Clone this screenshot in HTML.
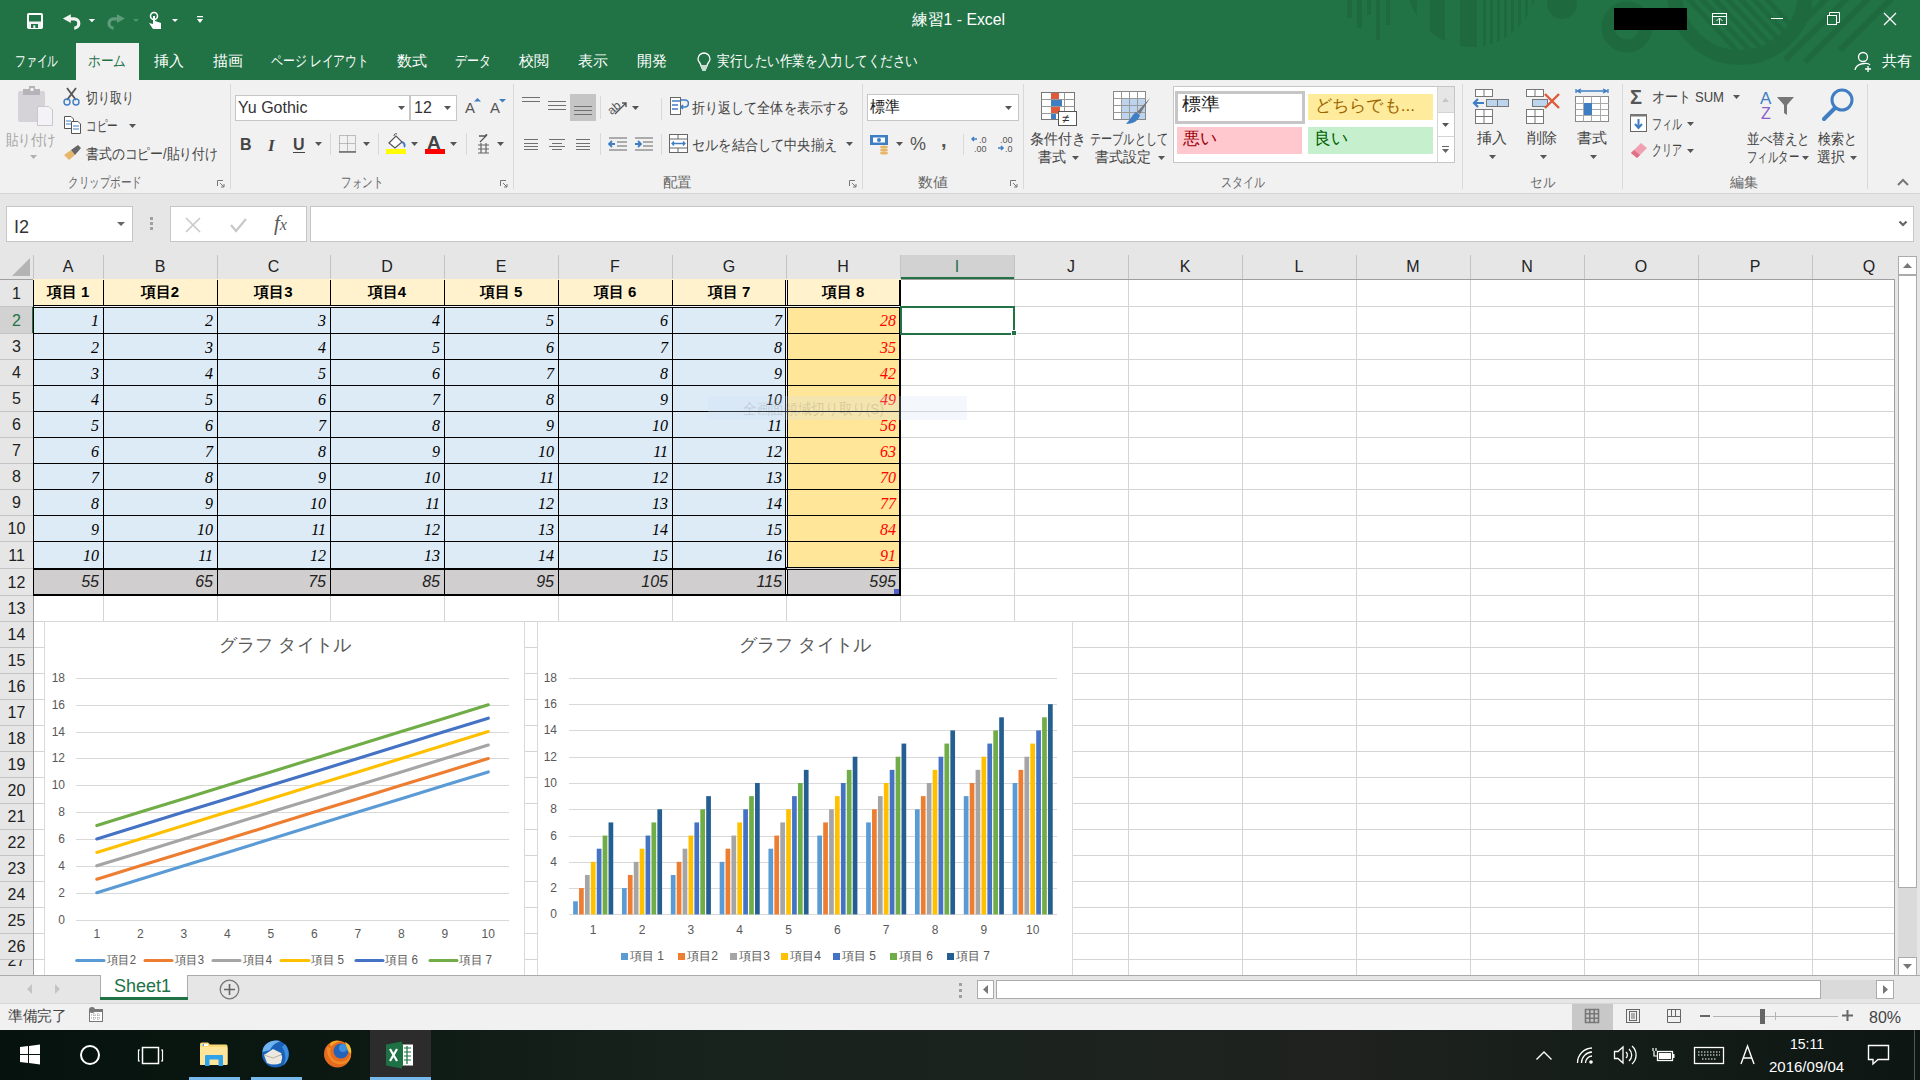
<!DOCTYPE html><html><head><meta charset="utf-8"><style>
*{margin:0;padding:0;box-sizing:border-box}
html,body{width:1920px;height:1080px;overflow:hidden;background:#fff;font-family:"Liberation Sans",sans-serif;}
.ab{position:absolute}
.t{position:absolute;white-space:nowrap;line-height:1}
</style></head><body>

<div class="ab" style="left:0px;top:0px;width:1920px;height:80px;background:#217346"></div>
<svg class="ab" style="left:0;top:0" width="1920" height="80">
<defs><clipPath id="cp1"><circle cx="1472" cy="-18" r="65"/></clipPath><clipPath id="cp2"><circle cx="1740" cy="-8" r="58"/></clipPath></defs>
<g fill="#1e6a3e">
<rect x="1347" y="0" width="5" height="18"/><rect x="1357" y="0" width="5" height="28"/><rect x="1367" y="0" width="4" height="15"/>
<rect x="1376" y="0" width="4" height="40"/><rect x="1386" y="0" width="4" height="25"/>
<g clip-path="url(#cp1)"><rect x="1407" y="-30" width="10" height="100"/><rect x="1430" y="-30" width="15" height="100"/><rect x="1460" y="-30" width="17" height="100"/><rect x="1483" y="-30" width="3" height="100"/><rect x="1490" y="-30" width="3" height="100"/><rect x="1497" y="-30" width="3" height="100"/><rect x="1504" y="-30" width="3" height="100"/><rect x="1511" y="-30" width="3" height="100"/><rect x="1518" y="-30" width="3" height="100"/><rect x="1525" y="-30" width="3" height="100"/><rect x="1532" y="-30" width="3" height="100"/></g>
<circle cx="1562" cy="4" r="15"/>
</g>
<circle cx="1627" cy="27" r="19" fill="none" stroke="#1e6a3e" stroke-width="13"/>
<circle cx="1740" cy="-8" r="65.5" fill="none" stroke="#1e6a3e" stroke-width="15"/>
<g clip-path="url(#cp2)" stroke="#1e6a3e" stroke-width="5"><line x1="1680" y1="-10" x2="1755" y2="70"/><line x1="1693" y1="-10" x2="1768" y2="70"/><line x1="1706" y1="-10" x2="1781" y2="70"/><line x1="1719" y1="-10" x2="1794" y2="70"/><line x1="1732" y1="-10" x2="1807" y2="70"/><line x1="1745" y1="-10" x2="1820" y2="70"/><line x1="1758" y1="-10" x2="1833" y2="70"/></g>
<g stroke="#1e6a3e" stroke-width="6">
<line x1="1830" y1="-5" x2="1770" y2="55"/><line x1="1850" y1="-5" x2="1785" y2="60"/><line x1="1872" y1="-5" x2="1805" y2="62"/><line x1="1895" y1="-5" x2="1840" y2="50"/>
</g>
</svg>
<svg class="ab" style="left:0;top:0" width="220" height="40">
<rect x="28" y="14" width="14" height="14" rx="0.8" stroke="#fff" stroke-width="2" fill="none"/>
<rect x="29" y="22" width="12" height="6" fill="#f2f2f2"/><rect x="29" y="21.5" width="12" height="1.5" fill="#f2f2f2"/>
<rect x="31" y="24" width="7" height="4" fill="#217346"/><rect x="33.3" y="25.3" width="2" height="2.7" fill="#f2f2f2"/>
<path d="M62.9,18.6 L70.8,14.2 L70.8,23 Z" fill="#f2f2f2"/><path d="M70,18.85 H74.2 A4.6,4.6 0 0 1 74.2,28.05" stroke="#f2f2f2" stroke-width="3.2" fill="none"/>
<polygon points="88.7,19 95.1,19 91.9,22.2" fill="#fff"/>
<path d="M124.9,18.6 L117,14.2 L117,23 Z" fill="#5c9c7a"/><path d="M117.8,18.85 H113.6 A4.6,4.6 0 0 0 113.6,28.05" stroke="#5c9c7a" stroke-width="3.2" fill="none"/>
<polygon points="133,19 139,19 136,22" fill="#4f9470"/>
<circle cx="154" cy="16" r="3.5" stroke="#fff" stroke-width="1.6" fill="none"/>
<path d="M153,16 L153,24 L149,23 L153,29 L161,29 L161,23 L155,21 L155,16 Z" fill="#fff"/>
<polygon points="172,19 178,19 175,22" fill="#fff"/>
<rect x="197" y="16" width="6" height="1.3" fill="#fff"/><polygon points="197,19 203,19 200,23" fill="#fff"/>
</svg>
<div class="t" id="f1" style="left:912px;top:12px;font-size:16px;color:#fff;transform:scaleX(0.9867);transform-origin:0 0;">練習1 - Excel</div>
<div class="ab" style="left:1614px;top:8px;width:73px;height:22px;background:#000"></div>
<svg class="ab" style="left:1700px;top:0" width="220" height="40">
<g stroke="#fff" stroke-width="1" fill="none">
<rect x="12.5" y="13.5" width="14" height="11"/><line x1="12.5" y1="16.5" x2="26.5" y2="16.5"/>
<path d="M19.5,24 L19.5,18 M16.5,21 L19.5,18 L22.5,21"/>
<line x1="71" y1="18.5" x2="83" y2="18.5"/>
<rect x="127.5" y="15.5" width="9" height="9"/><path d="M129.5,15.5 L129.5,12.5 L139.5,12.5 L139.5,22.5 L136.5,22.5"/>
<path d="M184,13 L196,25 M196,13 L184,25" stroke-width="1.3"/>
</g></svg>
<div class="ab" style="left:76px;top:43px;width:63px;height:37px;background:#f1f1f1"></div>
<div class="t" id="f2" style="left:15px;top:53px;font-size:15px;color:#fff;transform:scaleX(0.7167);transform-origin:0 0;">ファイル</div>
<div class="t" id="f3" style="left:88px;top:53px;font-size:15px;color:#217346;transform:scaleX(0.8444);transform-origin:0 0;">ホーム</div>
<div class="t" id="f4" style="left:154px;top:53px;font-size:15px;color:#fff;transform:scaleX(1.0000);transform-origin:0 0;">挿入</div>
<div class="t" id="f5" style="left:213px;top:53px;font-size:15px;color:#fff;transform:scaleX(1.0000);transform-origin:0 0;">描画</div>
<div class="t" id="f6" style="left:271px;top:53px;font-size:15px;color:#fff;transform:scaleX(0.7892);transform-origin:0 0;">ページ レイアウト</div>
<div class="t" id="f7" style="left:397px;top:53px;font-size:15px;color:#fff;transform:scaleX(1.0000);transform-origin:0 0;">数式</div>
<div class="t" id="f8" style="left:455px;top:53px;font-size:15px;color:#fff;transform:scaleX(0.8000);transform-origin:0 0;">データ</div>
<div class="t" id="f9" style="left:519px;top:53px;font-size:15px;color:#fff;transform:scaleX(1.0000);transform-origin:0 0;">校閲</div>
<div class="t" id="f10" style="left:578px;top:53px;font-size:15px;color:#fff;transform:scaleX(1.0000);transform-origin:0 0;">表示</div>
<div class="t" id="f11" style="left:637px;top:53px;font-size:15px;color:#fff;transform:scaleX(1.0000);transform-origin:0 0;">開発</div>
<svg class="ab" style="left:696px;top:51px" width="18" height="22"><path d="M8,2 A6,6 0 0 1 14,8 C14,11 11,12 11,15 L5,15 C5,12 2,11 2,8 A6,6 0 0 1 8,2 Z M5,17 L11,17 M6,19 L10,19" stroke="#fff" stroke-width="1.3" fill="none"/></svg>
<div class="t" id="f12" style="left:717px;top:53px;font-size:15px;color:#fff;transform:scaleX(0.8375);transform-origin:0 0;">実行したい作業を入力してください</div>
<svg class="ab" style="left:1854px;top:51px" width="22" height="22"><circle cx="9" cy="6" r="4.5" stroke="#fff" stroke-width="1.3" fill="none"/><path d="M1,19 C2,12 14,11 16,14 M14,15 L14,21 M11,18 L17,18" stroke="#fff" stroke-width="1.3" fill="none"/></svg>
<div class="t" id="f13" style="left:1882px;top:53px;font-size:15px;color:#fff;transform:scaleX(1.0000);transform-origin:0 0;">共有</div>
<div class="ab" style="left:0px;top:80px;width:1920px;height:113px;background:#f1f1f1"></div>
<div class="ab" style="left:0px;top:193px;width:1920px;height:1px;background:#d5d5d5"></div>
<svg class="ab" style="left:16px;top:86px" width="40" height="42">
<rect x="2" y="5" width="27" height="31" rx="2" fill="#d6d3d8"/>
<rect x="7" y="3" width="17" height="6" fill="#b5b3b8"/><rect x="13" y="0" width="6" height="5" fill="#b5b3b8"/><rect x="14.5" y="2" width="3" height="3" fill="#f1f1f1"/>
<path d="M21.5,20.5 L33,20.5 L36.5,24 L36.5,39.5 L21.5,39.5 Z" fill="#f4f2f6" stroke="#c9c6cc" stroke-width="1"/>
</svg>
<div class="t" id="f14" style="left:6px;top:132px;font-size:15px;color:#a3a3a3;transform:scaleX(0.8333);transform-origin:0 0;">貼り付け</div>
<svg class="ab" style="left:30px;top:155px" width="8" height="5"><polygon points="0,0 7,0 3.5,4" fill="#b0b0b0"/></svg>
<svg class="ab" style="left:63px;top:87px" width="20" height="20">
<path d="M4,1 L13,13 M13,1 L4,13" stroke="#555" stroke-width="1.8"/>
<circle cx="4" cy="15" r="3" stroke="#3f7ec3" stroke-width="1.4" fill="none"/><circle cx="13" cy="15" r="3" stroke="#3f7ec3" stroke-width="1.4" fill="none"/>
</svg>
<div class="t" id="f15" style="left:86px;top:90px;font-size:15px;color:#444;transform:scaleX(0.8000);transform-origin:0 0;">切り取り</div>
<svg class="ab" style="left:63px;top:115px" width="20" height="20">
<path d="M1.5,1.5 L8,1.5 L10.5,4 L10.5,13.5 L1.5,13.5 Z" fill="#fff" stroke="#555"/>
<path d="M8.5,6.5 L15,6.5 L17.5,9 L17.5,18.5 L8.5,18.5 Z" fill="#fff" stroke="#555"/>
<path d="M3,6 L8,6 M3,9 L8,9 M10,11 L16,11 M10,14 L16,14" stroke="#3f7ec3"/>
</svg>
<div class="t" id="f16" style="left:86px;top:118px;font-size:15px;color:#444;transform:scaleX(0.7111);transform-origin:0 0;">コピー</div>
<svg class="ab" style="left:129px;top:124px" width="8" height="5"><polygon points="0,0 7,0 3.5,4" fill="#555"/></svg>
<svg class="ab" style="left:63px;top:144px" width="20" height="18">
<path d="M1,11 L8,6 L12,11 L6,16 Z" fill="#e8b66a"/><path d="M8,6 L15,1 L18,4 L12,11 Z" fill="#666"/>
</svg>
<div class="t" id="f17" style="left:86px;top:146px;font-size:15px;color:#444;transform:scaleX(0.8562);transform-origin:0 0;">書式のコピー/貼り付け</div>
<div class="t" id="f18" style="left:68px;top:175px;font-size:14px;color:#666;transform:scaleX(0.7551);transform-origin:0 0;">クリップボード</div>
<svg class="ab" style="left:217px;top:180px" width="9" height="9"><path d="M0.5,6 L0.5,0.5 L6,0.5 M3,3 L7,7 M7,4 L7,7 L4,7" stroke="#777" stroke-width="1" fill="none"/></svg>
<div class="ab" style="left:230px;top:84px;width:1px;height:105px;background:#d9d9d9"></div>
<div class="ab" style="left:235px;top:95px;width:175px;height:26px;background:#fff;border:1px solid #c6c6c6"></div>
<div class="t" style="left:238px;top:100px;font-size:16px;color:#333">Yu Gothic</div>
<svg class="ab" style="left:398px;top:106px" width="8" height="5"><polygon points="0,0 7,0 3.5,4" fill="#555"/></svg>
<div class="ab" style="left:410px;top:95px;width:47px;height:26px;background:#fff;border:1px solid #c6c6c6"></div>
<div class="t" style="left:414px;top:100px;font-size:16px;color:#333">12</div>
<svg class="ab" style="left:444px;top:106px" width="8" height="5"><polygon points="0,0 7,0 3.5,4" fill="#555"/></svg>
<div class="t" style="left:465px;top:100px;font-size:15px;color:#555">A</div>
<svg class="ab" style="left:474px;top:98px" width="7" height="4"><polygon points="0,3.5 3.5,0 7,3.5" fill="#3f7ec3"/></svg>
<div class="t" style="left:490px;top:100px;font-size:15px;color:#555">A</div>
<svg class="ab" style="left:499px;top:99px" width="7" height="4"><polygon points="0,0 7,0 3.5,3.5" fill="#3f7ec3"/></svg>
<div class="t" style="left:240px;top:137px;font-size:16px;font-weight:bold;color:#444">B</div>
<div class="t" style="left:268px;top:137px;font-size:17px;font-style:italic;font-weight:bold;font-family:'Liberation Serif',serif;color:#444">I</div>
<div class="t" style="left:293px;top:137px;font-size:16px;font-weight:bold;color:#444">U</div>
<div class="ab" style="left:293px;top:152px;width:12px;height:1px;background:#444"></div>
<svg class="ab" style="left:315px;top:142px" width="8" height="5"><polygon points="0,0 7,0 3.5,4" fill="#555"/></svg>
<div class="ab" style="left:330px;top:133px;width:1px;height:22px;background:#d9d9d9"></div>
<svg class="ab" style="left:338px;top:134px" width="20" height="20"><path d="M1.5,1.5 H17.5 V17.5 H1.5 Z M9.5,1.5 V17.5 M1.5,9.5 H17.5" stroke="#888" stroke-width="1" stroke-dasharray="1,1" fill="none"/><path d="M1,18 H18" stroke="#555" stroke-width="1.3"/></svg>
<svg class="ab" style="left:363px;top:142px" width="8" height="5"><polygon points="0,0 7,0 3.5,4" fill="#555"/></svg>
<div class="ab" style="left:378px;top:133px;width:1px;height:22px;background:#d9d9d9"></div>
<svg class="ab" style="left:385px;top:133px" width="24" height="22"><path d="M4,10 L11,3 L17,9 L10,15 Z" fill="#fff" stroke="#555" stroke-width="1.2"/><path d="M9,3 A2,2 0 0 1 12,1" stroke="#555" fill="none"/><path d="M17,9 C20,10 20,13 19,14" stroke="#3f7ec3" stroke-width="2" fill="none"/><rect x="1" y="16" width="20" height="5" fill="#ffff00"/></svg>
<svg class="ab" style="left:411px;top:142px" width="8" height="5"><polygon points="0,0 7,0 3.5,4" fill="#555"/></svg>
<div class="t" style="left:427px;top:133px;font-size:19px;font-weight:bold;color:#444">A</div>
<div class="ab" style="left:425px;top:149px;width:20px;height:5px;background:#ff0000"></div>
<svg class="ab" style="left:450px;top:142px" width="8" height="5"><polygon points="0,0 7,0 3.5,4" fill="#555"/></svg>
<div class="ab" style="left:466px;top:133px;width:1px;height:22px;background:#d9d9d9"></div>
<svg class="ab" style="left:477px;top:134px" width="14" height="20"><path d="M2,2 H9 L3,8 M8,2 L10,0" stroke="#555" stroke-width="1.3" fill="none"/><path d="M1,11 H12 M1,15 H12 M1,19 H12 M4,9 V19 M9,9 V19" stroke="#666" stroke-width="1.2"/></svg>
<svg class="ab" style="left:497px;top:142px" width="8" height="5"><polygon points="0,0 7,0 3.5,4" fill="#555"/></svg>
<div class="t" id="f19" style="left:341px;top:175px;font-size:14px;color:#666;transform:scaleX(0.7500);transform-origin:0 0;">フォント</div>
<svg class="ab" style="left:500px;top:180px" width="9" height="9"><path d="M0.5,6 L0.5,0.5 L6,0.5 M3,3 L7,7 M7,4 L7,7 L4,7" stroke="#777" stroke-width="1" fill="none"/></svg>
<div class="ab" style="left:513px;top:84px;width:1px;height:105px;background:#d9d9d9"></div>
<svg class="ab" style="left:522px;top:97px" width="18" height="10"><rect x="0" y="0" width="18" height="1" fill="#707070"/><rect x="0" y="4" width="18" height="1" fill="#707070"/></svg>
<svg class="ab" style="left:548px;top:101px" width="18" height="14"><rect x="0" y="0" width="18" height="1" fill="#707070"/><rect x="0" y="4" width="18" height="1" fill="#707070"/><rect x="0" y="8" width="18" height="1" fill="#707070"/></svg>
<div class="ab" style="left:570px;top:94px;width:26px;height:27px;background:#c5c5c5"></div>
<svg class="ab" style="left:574px;top:106px" width="18" height="14"><rect x="0" y="0" width="18" height="1" fill="#707070"/><rect x="0" y="4" width="18" height="1" fill="#707070"/><rect x="0" y="8" width="18" height="1" fill="#707070"/></svg>
<div class="ab" style="left:600px;top:96px;width:1px;height:23px;background:#d9d9d9"></div>
<svg class="ab" style="left:607px;top:97px" width="24" height="20"><text x="0" y="14" font-size="12" fill="#555" transform="rotate(-40 8 10)" font-family="Liberation Sans">ab</text><path d="M8,17 L19,6 M15,6 L19,6 L19,10" stroke="#555" stroke-width="1.4" fill="none"/></svg>
<svg class="ab" style="left:632px;top:106px" width="8" height="5"><polygon points="0,0 7,0 3.5,4" fill="#555"/></svg>
<div class="ab" style="left:661px;top:98px;width:1px;height:22px;background:#d9d9d9"></div>
<svg class="ab" style="left:669px;top:96px" width="20" height="20"><rect x="1.5" y="1.5" width="10" height="17" fill="#fff" stroke="#666"/><path d="M3,5 H11 M3,9 H9 M3,13 H9" stroke="#3f7ec3" stroke-width="1.3"/><path d="M12,4 H16 A3,3 0 0 1 16,11 H12 M14,9 L12,11 L14,13" stroke="#3f7ec3" stroke-width="1.6" fill="none"/></svg>
<div class="t" id="f20" style="left:692px;top:100px;font-size:15px;color:#444;transform:scaleX(0.8722);transform-origin:0 0;">折り返して全体を表示する</div>
<svg class="ab" style="left:524px;top:139px" width="14" height="16.0"><rect x="0" y="0" width="14" height="1" fill="#707070"/><rect x="0" y="4" width="14" height="1" fill="#707070"/><rect x="0" y="7" width="14" height="1" fill="#707070"/><rect x="0" y="10" width="14" height="1" fill="#707070"/></svg>
<svg class="ab" style="left:549px;top:139px" width="16" height="16.0"><rect x="0.0" y="0" width="16" height="1" fill="#707070"/><rect x="3.0" y="4" width="10" height="1" fill="#707070"/><rect x="0.0" y="7" width="16" height="1" fill="#707070"/><rect x="3.0" y="10" width="10" height="1" fill="#707070"/></svg>
<svg class="ab" style="left:576px;top:139px" width="14" height="16.0"><rect x="0" y="0" width="14" height="1" fill="#707070"/><rect x="0" y="4" width="14" height="1" fill="#707070"/><rect x="0" y="7" width="14" height="1" fill="#707070"/><rect x="0" y="10" width="14" height="1" fill="#707070"/></svg>
<div class="ab" style="left:600px;top:133px;width:1px;height:22px;background:#d9d9d9"></div>
<svg class="ab" style="left:608px;top:135px" width="20" height="18"><path d="M1,3 H19 M9,7 H19 M9,11 H19 M1,15 H19" stroke="#666" stroke-width="1.2"/><path d="M7,9 H1 M4,6 L1,9 L4,12" stroke="#3f7ec3" stroke-width="1.8" fill="none"/></svg>
<svg class="ab" style="left:634px;top:135px" width="20" height="18"><path d="M1,3 H19 M9,7 H19 M9,11 H19 M1,15 H19" stroke="#666" stroke-width="1.2"/><path d="M1,9 H7 M4,6 L7,9 L4,12" stroke="#3f7ec3" stroke-width="1.8" fill="none"/></svg>
<div class="ab" style="left:661px;top:134px;width:1px;height:21px;background:#d9d9d9"></div>
<svg class="ab" style="left:668px;top:133px" width="22" height="22"><rect x="1.5" y="1.5" width="18" height="18" fill="#fff" stroke="#666"/><path d="M1.5,6 H19.5 M1.5,15 H19.5 M10,1.5 V6 M10,15 V19.5" stroke="#666"/><path d="M4,10.5 H17 M6,8.5 L4,10.5 L6,12.5 M15,8.5 L17,10.5 L15,12.5" stroke="#3f7ec3" stroke-width="1.3" fill="none"/></svg>
<div class="t" id="f21" style="left:692px;top:137px;font-size:15px;color:#444;transform:scaleX(0.8788);transform-origin:0 0;">セルを結合して中央揃え</div>
<svg class="ab" style="left:846px;top:142px" width="8" height="5"><polygon points="0,0 7,0 3.5,4" fill="#555"/></svg>
<div class="t" id="f22" style="left:663px;top:175px;font-size:14px;color:#666;transform:scaleX(1.0357);transform-origin:0 0;">配置</div>
<svg class="ab" style="left:849px;top:180px" width="9" height="9"><path d="M0.5,6 L0.5,0.5 L6,0.5 M3,3 L7,7 M7,4 L7,7 L4,7" stroke="#777" stroke-width="1" fill="none"/></svg>
<div class="ab" style="left:862px;top:84px;width:1px;height:105px;background:#d9d9d9"></div>
<div class="ab" style="left:867px;top:94px;width:152px;height:27px;background:#fff;border:1px solid #c6c6c6"></div>
<div class="t" id="f23" style="left:870px;top:99px;font-size:16px;color:#222;transform:scaleX(0.9375);transform-origin:0 0;">標準</div>
<svg class="ab" style="left:1005px;top:106px" width="8" height="5"><polygon points="0,0 7,0 3.5,4" fill="#555"/></svg>
<svg class="ab" style="left:869px;top:134px" width="22" height="22"><rect x="1" y="1" width="18" height="10" fill="#3f7ec3"/><rect x="4" y="3.5" width="12" height="5" fill="#fff"/><circle cx="10" cy="6" r="2" fill="#3f7ec3"/><ellipse cx="15" cy="13" rx="4" ry="1.6" fill="#e8b66a"/><ellipse cx="15" cy="16" rx="4" ry="1.6" fill="#e8b66a"/><ellipse cx="15" cy="19" rx="4" ry="1.6" fill="#e8b66a"/></svg>
<svg class="ab" style="left:896px;top:142px" width="8" height="5"><polygon points="0,0 7,0 3.5,4" fill="#555"/></svg>
<div class="t" style="left:910px;top:135px;font-size:18px;color:#555">%</div>
<div class="t" style="left:941px;top:130px;font-size:20px;font-weight:bold;color:#555">,</div>
<div class="ab" style="left:963px;top:134px;width:1px;height:21px;background:#d9d9d9"></div>
<svg class="ab" style="left:971px;top:134px" width="20" height="20"><path d="M6,5 H1 M3,3 L1,5 L3,7" stroke="#3f7ec3" stroke-width="1.5" fill="none"/><text x="8" y="9" font-size="9" fill="#555" font-family="Liberation Sans">.0</text><text x="3" y="18" font-size="9" fill="#555" font-family="Liberation Sans">.00</text></svg>
<svg class="ab" style="left:997px;top:134px" width="20" height="20"><text x="3" y="9" font-size="9" fill="#555" font-family="Liberation Sans">.00</text><path d="M1,14 H6 M4,12 L6,14 L4,16" stroke="#3f7ec3" stroke-width="1.5" fill="none"/><text x="8" y="18" font-size="9" fill="#555" font-family="Liberation Sans">.0</text></svg>
<div class="t" id="f24" style="left:918px;top:175px;font-size:14px;color:#666;transform:scaleX(1.0714);transform-origin:0 0;">数値</div>
<svg class="ab" style="left:1010px;top:180px" width="9" height="9"><path d="M0.5,6 L0.5,0.5 L6,0.5 M3,3 L7,7 M7,4 L7,7 L4,7" stroke="#777" stroke-width="1" fill="none"/></svg>
<div class="ab" style="left:1023px;top:84px;width:1px;height:105px;background:#d9d9d9"></div>
<svg class="ab" style="left:1040px;top:91px" width="40" height="36">
<rect x="1.5" y="1.5" width="33" height="27" fill="#fff" stroke="#777"/>
<path d="M1.5,8.5 H34.5 M1.5,15.5 H34.5 M1.5,22.5 H34.5 M11.5,1.5 V28.5 M24.5,1.5 V28.5" stroke="#999"/>
<rect x="11" y="2" width="8" height="6" fill="#e0593a"/><rect x="11" y="9" width="11" height="6" fill="#3f7ec3"/><rect x="11" y="16" width="9" height="6" fill="#e0593a"/><rect x="11" y="23" width="5" height="5" fill="#3f7ec3"/>
<rect x="18.5" y="20.5" width="18" height="14" fill="#fff" stroke="#555"/><text x="22" y="32" font-size="13" fill="#333" font-family="Liberation Sans">≠</text>
</svg>
<div class="t" id="f25" style="left:1030px;top:131px;font-size:15px;color:#444;transform:scaleX(0.9333);transform-origin:0 0;">条件付き</div>
<div class="t" id="f26" style="left:1038px;top:149px;font-size:15px;color:#444;transform:scaleX(0.9333);transform-origin:0 0;">書式</div>
<svg class="ab" style="left:1072px;top:156px" width="8" height="5"><polygon points="0,0 7,0 3.5,4" fill="#555"/></svg>
<svg class="ab" style="left:1112px;top:90px" width="42" height="38">
<rect x="1.5" y="1.5" width="32" height="28" fill="#fff" stroke="#888"/>
<rect x="9" y="8" width="24" height="21" fill="#bcd4ee"/>
<path d="M1.5,8.5 H33.5 M1.5,15.5 H33.5 M1.5,22.5 H33.5 M9.5,1.5 V29.5 M17.5,1.5 V29.5 M25.5,1.5 V29.5" stroke="#999"/>
<path d="M38,8 L28,24 L25,22 Z" fill="#777"/><path d="M24,22 C20,25 18,30 14,34 C22,34 27,30 28,25 Z" fill="#3f7ec3"/>
</svg>
<div class="t" id="f27" style="left:1090px;top:131px;font-size:15px;color:#444;transform:scaleX(0.7429);transform-origin:0 0;">テーブルとして</div>
<div class="t" id="f28" style="left:1095px;top:149px;font-size:15px;color:#444;transform:scaleX(0.9333);transform-origin:0 0;">書式設定</div>
<svg class="ab" style="left:1158px;top:156px" width="8" height="5"><polygon points="0,0 7,0 3.5,4" fill="#555"/></svg>
<div class="ab" style="left:1173px;top:86px;width:282px;height:77px;background:#fff;border:1px solid #c6c6c6"></div>
<div class="ab" style="left:1437px;top:87px;width:1px;height:75px;background:#d5d5d5"></div>
<div class="ab" style="left:1438px;top:87px;width:16px;height:25px;background:#e6e6e6"></div>
<div class="ab" style="left:1438px;top:112px;width:16px;height:1px;background:#d5d5d5"></div>
<div class="ab" style="left:1438px;top:136px;width:16px;height:1px;background:#d5d5d5"></div>
<svg class="ab" style="left:1442px;top:98px" width="8" height="5"><polygon points="0,4 7,4 3.5,0" fill="#c6c6c6"/></svg>
<svg class="ab" style="left:1442px;top:123px" width="8" height="5"><polygon points="0,0 7,0 3.5,4" fill="#555"/></svg>
<svg class="ab" style="left:1442px;top:146px" width="8" height="8"><rect x="0" y="0" width="7" height="1" fill="#666"/><polygon points="0,3 7,3 3.5,7" fill="#666"/></svg>
<div class="ab" style="left:1175px;top:91px;width:130px;height:33px;background:#fff;border:3px solid #c6c6c6"></div>
<div class="t" id="f29" style="left:1182px;top:95px;font-size:18px;color:#222;transform:scaleX(1.0556);transform-origin:0 0;">標準</div>
<div class="ab" style="left:1308px;top:94px;width:125px;height:26px;background:#ffeb9c"></div>
<div class="t" id="f30" style="left:1315px;top:97px;font-size:17px;color:#9c6500;transform:scaleX(1.0084);transform-origin:0 0;">どちらでも...</div>
<div class="ab" style="left:1177px;top:127px;width:125px;height:27px;background:#ffc7ce"></div>
<div class="t" id="f31" style="left:1183px;top:130px;font-size:17px;color:#9c0006;transform:scaleX(1.0000);transform-origin:0 0;">悪い</div>
<div class="ab" style="left:1308px;top:127px;width:125px;height:27px;background:#c6efce"></div>
<div class="t" id="f32" style="left:1314px;top:130px;font-size:17px;color:#006100;transform:scaleX(1.0000);transform-origin:0 0;">良い</div>
<div class="t" id="f33" style="left:1221px;top:175px;font-size:14px;color:#666;transform:scaleX(0.7857);transform-origin:0 0;">スタイル</div>
<div class="ab" style="left:1462px;top:84px;width:1px;height:105px;background:#d9d9d9"></div>
<svg class="ab" style="left:1472px;top:88px" width="40" height="38">
<rect x="3.5" y="1.5" width="17" height="7" fill="#fff" stroke="#777"/><path d="M12,1.5 V8.5" stroke="#777"/>
<rect x="14.5" y="11.5" width="22" height="7" fill="#bcd4ee" stroke="#777"/><path d="M25.5,11.5 V18.5" stroke="#777"/>
<path d="M12,15 H2 M6,11 L2,15 L6,19" stroke="#3f7ec3" stroke-width="2.2" fill="none"/>
<rect x="3.5" y="21.5" width="17" height="14" fill="#fff" stroke="#777"/><path d="M3.5,28.5 H20.5 M12,21.5 V35.5" stroke="#777"/>
</svg>
<div class="t" id="f34" style="left:1477px;top:130px;font-size:15px;color:#444;transform:scaleX(1.0000);transform-origin:0 0;">挿入</div>
<svg class="ab" style="left:1489px;top:155px" width="8" height="5"><polygon points="0,0 7,0 3.5,4" fill="#555"/></svg>
<svg class="ab" style="left:1525px;top:88px" width="40" height="38">
<rect x="1.5" y="1.5" width="17" height="7" fill="#fff" stroke="#777"/><path d="M10,1.5 V8.5" stroke="#777"/>
<rect x="7.5" y="11.5" width="15" height="7" fill="#bcd4ee" stroke="#777"/>
<path d="M20,6 L34,20 M34,6 L20,20" stroke="#e0593a" stroke-width="2.4"/>
<rect x="1.5" y="21.5" width="17" height="14" fill="#fff" stroke="#777"/><path d="M1.5,28.5 H18.5 M10,21.5 V35.5" stroke="#777"/>
</svg>
<div class="t" id="f35" style="left:1527px;top:130px;font-size:15px;color:#444;transform:scaleX(1.0000);transform-origin:0 0;">削除</div>
<svg class="ab" style="left:1540px;top:155px" width="8" height="5"><polygon points="0,0 7,0 3.5,4" fill="#555"/></svg>
<svg class="ab" style="left:1574px;top:87px" width="38" height="40">
<path d="M2,2 V6 M34,2 V6 M3,4 H33 M7,2 L3,4 L7,6 M29,2 L33,4 L29,6" stroke="#3f7ec3" stroke-width="1.3" fill="none"/>
<rect x="1.5" y="9.5" width="33" height="25" fill="#fff" stroke="#888"/>
<path d="M1.5,16.5 H34.5 M1.5,22.5 H34.5 M1.5,28.5 H34.5 M9.5,9.5 V34.5 M17.5,9.5 V34.5 M26.5,9.5 V34.5" stroke="#aaa"/>
<rect x="10" y="16" width="8" height="12" fill="#3f7ec3"/>
</svg>
<div class="t" id="f36" style="left:1577px;top:130px;font-size:15px;color:#444;transform:scaleX(1.0000);transform-origin:0 0;">書式</div>
<svg class="ab" style="left:1590px;top:155px" width="8" height="5"><polygon points="0,0 7,0 3.5,4" fill="#555"/></svg>
<div class="t" id="f37" style="left:1530px;top:175px;font-size:14px;color:#666;transform:scaleX(0.8929);transform-origin:0 0;">セル</div>
<div class="ab" style="left:1622px;top:84px;width:1px;height:105px;background:#d9d9d9"></div>
<div class="t" style="left:1630px;top:87px;font-size:20px;font-weight:bold;color:#555">Σ</div>
<div class="t" id="f38" style="left:1652px;top:89px;font-size:15px;color:#444;transform:scaleX(0.8727);transform-origin:0 0;">オート SUM</div>
<svg class="ab" style="left:1733px;top:95px" width="8" height="5"><polygon points="0,0 7,0 3.5,4" fill="#555"/></svg>
<svg class="ab" style="left:1629px;top:113px" width="20" height="20"><rect x="1.5" y="1.5" width="16" height="17" fill="#fff" stroke="#666"/><rect x="1" y="1" width="17" height="2.5" fill="#777"/><path d="M9.5,6 V15 M6,11 L9.5,15 L13,11" stroke="#3f7ec3" stroke-width="2" fill="none"/></svg>
<div class="t" id="f39" style="left:1652px;top:116px;font-size:15px;color:#444;transform:scaleX(0.6667);transform-origin:0 0;">フィル</div>
<svg class="ab" style="left:1687px;top:122px" width="8" height="5"><polygon points="0,0 7,0 3.5,4" fill="#555"/></svg>
<svg class="ab" style="left:1629px;top:141px" width="20" height="18"><path d="M2,12 L12,2 L18,7 L8,17 Z" fill="#f0a0b0"/><path d="M2,12 L5,9 L11,14 L8,17 Z" fill="#e07088"/></svg>
<div class="t" id="f40" style="left:1652px;top:142px;font-size:15px;color:#444;transform:scaleX(0.6667);transform-origin:0 0;">クリア</div>
<svg class="ab" style="left:1687px;top:149px" width="8" height="5"><polygon points="0,0 7,0 3.5,4" fill="#555"/></svg>
<svg class="ab" style="left:1760px;top:88px" width="38" height="34">
<text x="0" y="16" font-size="17" fill="#3f7ec3" font-family="Liberation Sans">A</text><text x="1" y="31" font-size="16" fill="#8c5fc8" font-family="Liberation Sans">Z</text>
<path d="M17,9 H34 L27,17 V27 L24,25 V17 Z" fill="#777"/>
</svg>
<div class="t" id="f41" style="left:1747px;top:131px;font-size:15px;color:#444;transform:scaleX(0.8400);transform-origin:0 0;">並べ替えと</div>
<div class="t" id="f42" style="left:1747px;top:149px;font-size:15px;color:#444;transform:scaleX(0.6933);transform-origin:0 0;">フィルター</div>
<svg class="ab" style="left:1802px;top:156px" width="8" height="5"><polygon points="0,0 7,0 3.5,4" fill="#555"/></svg>
<svg class="ab" style="left:1820px;top:87px" width="38" height="38"><circle cx="22" cy="13" r="10" stroke="#3f7ec3" stroke-width="3" fill="none"/><path d="M15,21 L4,32" stroke="#3f7ec3" stroke-width="4" stroke-linecap="round"/></svg>
<div class="t" id="f43" style="left:1818px;top:131px;font-size:15px;color:#444;transform:scaleX(0.8667);transform-origin:0 0;">検索と</div>
<div class="t" id="f44" style="left:1817px;top:149px;font-size:15px;color:#444;transform:scaleX(0.9333);transform-origin:0 0;">選択</div>
<svg class="ab" style="left:1850px;top:156px" width="8" height="5"><polygon points="0,0 7,0 3.5,4" fill="#555"/></svg>
<div class="t" id="f45" style="left:1730px;top:175px;font-size:14px;color:#666;transform:scaleX(1.0000);transform-origin:0 0;">編集</div>
<div class="ab" style="left:1867px;top:84px;width:1px;height:105px;background:#d9d9d9"></div>
<svg class="ab" style="left:1896px;top:177px" width="14" height="9"><path d="M2,8 L7,3 L12,8" stroke="#777" stroke-width="2" fill="none"/></svg>
<div class="ab" style="left:0px;top:194px;width:1920px;height:61px;background:#e6e6e6"></div>
<div class="ab" style="left:6px;top:206px;width:127px;height:36px;background:#fff;border:1px solid #c6c6c6"></div>
<div class="t" style="left:14px;top:218px;font-size:18px;color:#333">I2</div>
<svg class="ab" style="left:116px;top:221px" width="10" height="6"><polygon points="1,1 9,1 5,5" fill="#666"/></svg>
<div class="ab" style="left:150px;top:217px;width:3px;height:3px;background:#a0a0a0"></div>
<div class="ab" style="left:150px;top:222px;width:3px;height:3px;background:#a0a0a0"></div>
<div class="ab" style="left:150px;top:227px;width:3px;height:3px;background:#a0a0a0"></div>
<div class="ab" style="left:170px;top:206px;width:137px;height:36px;background:#fff;border:1px solid #c6c6c6"></div>
<svg class="ab" style="left:184px;top:216px" width="18" height="18"><path d="M2,2 L16,16 M16,2 L2,16" stroke="#c8c8c8" stroke-width="1.6"/></svg>
<svg class="ab" style="left:229px;top:216px" width="20" height="18"><path d="M2,9 L7,15 L17,3" stroke="#c8c8c8" stroke-width="2.2" fill="none"/></svg>
<div class="t" style="left:274px;top:213px;font-size:21px;font-family:'Liberation Serif',serif;color:#5a5a5a"><i>f</i><i style="font-size:16px">x</i></div>
<div class="ab" style="left:310px;top:206px;width:1604px;height:36px;background:#fff;border:1px solid #c6c6c6"></div>
<svg class="ab" style="left:1898px;top:220px" width="12" height="8"><path d="M1.5,1.5 L5,5 L8.5,1.5" stroke="#666" stroke-width="2.2" fill="none"/></svg>
<div class="ab" style="left:34px;top:280px;width:1860px;height:695px;background:#fff"></div>
<div class="ab" style="left:0px;top:255px;width:1895px;height:24px;background:#e6e6e6"></div>
<svg class="ab" style="left:0;top:255px" width="33" height="24"><polygon points="12,21 30,21 30,3" fill="#b4b4b4"/></svg>
<div class="ab" style="left:901px;top:255px;width:113px;height:22px;background:#d2d2d2"></div>
<div class="ab" style="left:901px;top:277px;width:113px;height:2px;background:#217346"></div>
<div class="ab" style="left:33px;top:255px;width:1px;height:24px;background:#c4c4c4"></div>
<div class="ab" style="left:103px;top:255px;width:1px;height:24px;background:#c4c4c4"></div>
<div class="ab" style="left:217px;top:255px;width:1px;height:24px;background:#c4c4c4"></div>
<div class="ab" style="left:330px;top:255px;width:1px;height:24px;background:#c4c4c4"></div>
<div class="ab" style="left:444px;top:255px;width:1px;height:24px;background:#c4c4c4"></div>
<div class="ab" style="left:558px;top:255px;width:1px;height:24px;background:#c4c4c4"></div>
<div class="ab" style="left:672px;top:255px;width:1px;height:24px;background:#c4c4c4"></div>
<div class="ab" style="left:786px;top:255px;width:1px;height:24px;background:#c4c4c4"></div>
<div class="ab" style="left:900px;top:255px;width:1px;height:24px;background:#c4c4c4"></div>
<div class="ab" style="left:1014px;top:255px;width:1px;height:24px;background:#c4c4c4"></div>
<div class="ab" style="left:1128px;top:255px;width:1px;height:24px;background:#c4c4c4"></div>
<div class="ab" style="left:1242px;top:255px;width:1px;height:24px;background:#c4c4c4"></div>
<div class="ab" style="left:1356px;top:255px;width:1px;height:24px;background:#c4c4c4"></div>
<div class="ab" style="left:1470px;top:255px;width:1px;height:24px;background:#c4c4c4"></div>
<div class="ab" style="left:1584px;top:255px;width:1px;height:24px;background:#c4c4c4"></div>
<div class="ab" style="left:1698px;top:255px;width:1px;height:24px;background:#c4c4c4"></div>
<div class="ab" style="left:1812px;top:255px;width:1px;height:24px;background:#c4c4c4"></div>
<div class="ab" style="left:0px;top:279px;width:1894px;height:1px;background:#9f9f9f"></div>
<div class="t" style="left:48.0px;top:259px;width:40px;text-align:center;font-size:16px;color:#222">A</div>
<div class="t" style="left:140.0px;top:259px;width:40px;text-align:center;font-size:16px;color:#222">B</div>
<div class="t" style="left:253.5px;top:259px;width:40px;text-align:center;font-size:16px;color:#222">C</div>
<div class="t" style="left:367.0px;top:259px;width:40px;text-align:center;font-size:16px;color:#222">D</div>
<div class="t" style="left:481.0px;top:259px;width:40px;text-align:center;font-size:16px;color:#222">E</div>
<div class="t" style="left:595.0px;top:259px;width:40px;text-align:center;font-size:16px;color:#222">F</div>
<div class="t" style="left:709.0px;top:259px;width:40px;text-align:center;font-size:16px;color:#222">G</div>
<div class="t" style="left:823.0px;top:259px;width:40px;text-align:center;font-size:16px;color:#222">H</div>
<div class="t" style="left:937.0px;top:259px;width:40px;text-align:center;font-size:16px;color:#217346">I</div>
<div class="t" style="left:1051.0px;top:259px;width:40px;text-align:center;font-size:16px;color:#222">J</div>
<div class="t" style="left:1165.0px;top:259px;width:40px;text-align:center;font-size:16px;color:#222">K</div>
<div class="t" style="left:1279.0px;top:259px;width:40px;text-align:center;font-size:16px;color:#222">L</div>
<div class="t" style="left:1393.0px;top:259px;width:40px;text-align:center;font-size:16px;color:#222">M</div>
<div class="t" style="left:1507.0px;top:259px;width:40px;text-align:center;font-size:16px;color:#222">N</div>
<div class="t" style="left:1621.0px;top:259px;width:40px;text-align:center;font-size:16px;color:#222">O</div>
<div class="t" style="left:1735.0px;top:259px;width:40px;text-align:center;font-size:16px;color:#222">P</div>
<div class="t" style="left:1849.0px;top:259px;width:40px;text-align:center;font-size:16px;color:#222">Q</div>
<div class="ab" style="left:0px;top:280px;width:33px;height:695px;background:#e6e6e6"></div>
<div class="ab" style="left:0px;top:307px;width:32px;height:26px;background:#d2d2d2"></div>
<div class="ab" style="left:32px;top:307px;width:2px;height:26px;background:#217346"></div>
<div class="ab" style="left:33px;top:280px;width:1px;height:695px;background:#9f9f9f"></div>
<div class="ab" style="left:0px;top:306px;width:33px;height:1px;background:#c4c4c4"></div>
<div class="ab" style="left:0px;top:333px;width:33px;height:1px;background:#c4c4c4"></div>
<div class="ab" style="left:0px;top:359px;width:33px;height:1px;background:#c4c4c4"></div>
<div class="ab" style="left:0px;top:385px;width:33px;height:1px;background:#c4c4c4"></div>
<div class="ab" style="left:0px;top:411px;width:33px;height:1px;background:#c4c4c4"></div>
<div class="ab" style="left:0px;top:437px;width:33px;height:1px;background:#c4c4c4"></div>
<div class="ab" style="left:0px;top:463px;width:33px;height:1px;background:#c4c4c4"></div>
<div class="ab" style="left:0px;top:489px;width:33px;height:1px;background:#c4c4c4"></div>
<div class="ab" style="left:0px;top:515px;width:33px;height:1px;background:#c4c4c4"></div>
<div class="ab" style="left:0px;top:541px;width:33px;height:1px;background:#c4c4c4"></div>
<div class="ab" style="left:0px;top:568px;width:33px;height:1px;background:#c4c4c4"></div>
<div class="ab" style="left:0px;top:595px;width:33px;height:1px;background:#c4c4c4"></div>
<div class="ab" style="left:0px;top:621px;width:33px;height:1px;background:#c4c4c4"></div>
<div class="ab" style="left:0px;top:647px;width:33px;height:1px;background:#c4c4c4"></div>
<div class="ab" style="left:0px;top:673px;width:33px;height:1px;background:#c4c4c4"></div>
<div class="ab" style="left:0px;top:699px;width:33px;height:1px;background:#c4c4c4"></div>
<div class="ab" style="left:0px;top:725px;width:33px;height:1px;background:#c4c4c4"></div>
<div class="ab" style="left:0px;top:751px;width:33px;height:1px;background:#c4c4c4"></div>
<div class="ab" style="left:0px;top:777px;width:33px;height:1px;background:#c4c4c4"></div>
<div class="ab" style="left:0px;top:803px;width:33px;height:1px;background:#c4c4c4"></div>
<div class="ab" style="left:0px;top:829px;width:33px;height:1px;background:#c4c4c4"></div>
<div class="ab" style="left:0px;top:855px;width:33px;height:1px;background:#c4c4c4"></div>
<div class="ab" style="left:0px;top:881px;width:33px;height:1px;background:#c4c4c4"></div>
<div class="ab" style="left:0px;top:907px;width:33px;height:1px;background:#c4c4c4"></div>
<div class="ab" style="left:0px;top:933px;width:33px;height:1px;background:#c4c4c4"></div>
<div class="ab" style="left:0px;top:959px;width:33px;height:1px;background:#c4c4c4"></div>
<div class="t" style="left:0px;top:285.5px;width:33px;text-align:center;font-size:16px;color:#222">1</div>
<div class="t" style="left:0px;top:312.5px;width:33px;text-align:center;font-size:16px;color:#217346">2</div>
<div class="t" style="left:0px;top:339.0px;width:33px;text-align:center;font-size:16px;color:#222">3</div>
<div class="t" style="left:0px;top:365.0px;width:33px;text-align:center;font-size:16px;color:#222">4</div>
<div class="t" style="left:0px;top:391.0px;width:33px;text-align:center;font-size:16px;color:#222">5</div>
<div class="t" style="left:0px;top:417.0px;width:33px;text-align:center;font-size:16px;color:#222">6</div>
<div class="t" style="left:0px;top:443.0px;width:33px;text-align:center;font-size:16px;color:#222">7</div>
<div class="t" style="left:0px;top:469.0px;width:33px;text-align:center;font-size:16px;color:#222">8</div>
<div class="t" style="left:0px;top:495.0px;width:33px;text-align:center;font-size:16px;color:#222">9</div>
<div class="t" style="left:0px;top:521.0px;width:33px;text-align:center;font-size:16px;color:#222">10</div>
<div class="t" style="left:0px;top:547.5px;width:33px;text-align:center;font-size:16px;color:#222">11</div>
<div class="t" style="left:0px;top:574.5px;width:33px;text-align:center;font-size:16px;color:#222">12</div>
<div class="t" style="left:0px;top:601.0px;width:33px;text-align:center;font-size:16px;color:#222">13</div>
<div class="t" style="left:0px;top:627.0px;width:33px;text-align:center;font-size:16px;color:#222">14</div>
<div class="t" style="left:0px;top:653.0px;width:33px;text-align:center;font-size:16px;color:#222">15</div>
<div class="t" style="left:0px;top:679.0px;width:33px;text-align:center;font-size:16px;color:#222">16</div>
<div class="t" style="left:0px;top:705.0px;width:33px;text-align:center;font-size:16px;color:#222">17</div>
<div class="t" style="left:0px;top:731.0px;width:33px;text-align:center;font-size:16px;color:#222">18</div>
<div class="t" style="left:0px;top:757.0px;width:33px;text-align:center;font-size:16px;color:#222">19</div>
<div class="t" style="left:0px;top:783.0px;width:33px;text-align:center;font-size:16px;color:#222">20</div>
<div class="t" style="left:0px;top:809.0px;width:33px;text-align:center;font-size:16px;color:#222">21</div>
<div class="t" style="left:0px;top:835.0px;width:33px;text-align:center;font-size:16px;color:#222">22</div>
<div class="t" style="left:0px;top:861.0px;width:33px;text-align:center;font-size:16px;color:#222">23</div>
<div class="t" style="left:0px;top:887.0px;width:33px;text-align:center;font-size:16px;color:#222">24</div>
<div class="t" style="left:0px;top:913.0px;width:33px;text-align:center;font-size:16px;color:#222">25</div>
<div class="t" style="left:0px;top:939.0px;width:33px;text-align:center;font-size:16px;color:#222">26</div>
<div class="ab" style="left:0;top:960px;width:33px;height:15px;overflow:hidden"><div class="t" style="left:0;top:-7px;width:33px;text-align:center;font-size:16px;color:#222">27</div></div>
<div class="ab" style="left:103px;top:280px;width:1px;height:695px;background:#d4d4d4"></div>
<div class="ab" style="left:217px;top:280px;width:1px;height:695px;background:#d4d4d4"></div>
<div class="ab" style="left:330px;top:280px;width:1px;height:695px;background:#d4d4d4"></div>
<div class="ab" style="left:444px;top:280px;width:1px;height:695px;background:#d4d4d4"></div>
<div class="ab" style="left:558px;top:280px;width:1px;height:695px;background:#d4d4d4"></div>
<div class="ab" style="left:672px;top:280px;width:1px;height:695px;background:#d4d4d4"></div>
<div class="ab" style="left:786px;top:280px;width:1px;height:695px;background:#d4d4d4"></div>
<div class="ab" style="left:900px;top:280px;width:1px;height:695px;background:#d4d4d4"></div>
<div class="ab" style="left:1014px;top:280px;width:1px;height:695px;background:#d4d4d4"></div>
<div class="ab" style="left:1128px;top:280px;width:1px;height:695px;background:#d4d4d4"></div>
<div class="ab" style="left:1242px;top:280px;width:1px;height:695px;background:#d4d4d4"></div>
<div class="ab" style="left:1356px;top:280px;width:1px;height:695px;background:#d4d4d4"></div>
<div class="ab" style="left:1470px;top:280px;width:1px;height:695px;background:#d4d4d4"></div>
<div class="ab" style="left:1584px;top:280px;width:1px;height:695px;background:#d4d4d4"></div>
<div class="ab" style="left:1698px;top:280px;width:1px;height:695px;background:#d4d4d4"></div>
<div class="ab" style="left:1812px;top:280px;width:1px;height:695px;background:#d4d4d4"></div>
<div class="ab" style="left:34px;top:306px;width:1860px;height:1px;background:#d4d4d4"></div>
<div class="ab" style="left:34px;top:333px;width:1860px;height:1px;background:#d4d4d4"></div>
<div class="ab" style="left:34px;top:359px;width:1860px;height:1px;background:#d4d4d4"></div>
<div class="ab" style="left:34px;top:385px;width:1860px;height:1px;background:#d4d4d4"></div>
<div class="ab" style="left:34px;top:411px;width:1860px;height:1px;background:#d4d4d4"></div>
<div class="ab" style="left:34px;top:437px;width:1860px;height:1px;background:#d4d4d4"></div>
<div class="ab" style="left:34px;top:463px;width:1860px;height:1px;background:#d4d4d4"></div>
<div class="ab" style="left:34px;top:489px;width:1860px;height:1px;background:#d4d4d4"></div>
<div class="ab" style="left:34px;top:515px;width:1860px;height:1px;background:#d4d4d4"></div>
<div class="ab" style="left:34px;top:541px;width:1860px;height:1px;background:#d4d4d4"></div>
<div class="ab" style="left:34px;top:568px;width:1860px;height:1px;background:#d4d4d4"></div>
<div class="ab" style="left:34px;top:595px;width:1860px;height:1px;background:#d4d4d4"></div>
<div class="ab" style="left:34px;top:621px;width:1860px;height:1px;background:#d4d4d4"></div>
<div class="ab" style="left:34px;top:647px;width:1860px;height:1px;background:#d4d4d4"></div>
<div class="ab" style="left:34px;top:673px;width:1860px;height:1px;background:#d4d4d4"></div>
<div class="ab" style="left:34px;top:699px;width:1860px;height:1px;background:#d4d4d4"></div>
<div class="ab" style="left:34px;top:725px;width:1860px;height:1px;background:#d4d4d4"></div>
<div class="ab" style="left:34px;top:751px;width:1860px;height:1px;background:#d4d4d4"></div>
<div class="ab" style="left:34px;top:777px;width:1860px;height:1px;background:#d4d4d4"></div>
<div class="ab" style="left:34px;top:803px;width:1860px;height:1px;background:#d4d4d4"></div>
<div class="ab" style="left:34px;top:829px;width:1860px;height:1px;background:#d4d4d4"></div>
<div class="ab" style="left:34px;top:855px;width:1860px;height:1px;background:#d4d4d4"></div>
<div class="ab" style="left:34px;top:881px;width:1860px;height:1px;background:#d4d4d4"></div>
<div class="ab" style="left:34px;top:907px;width:1860px;height:1px;background:#d4d4d4"></div>
<div class="ab" style="left:34px;top:933px;width:1860px;height:1px;background:#d4d4d4"></div>
<div class="ab" style="left:34px;top:959px;width:1860px;height:1px;background:#d4d4d4"></div>
<div class="ab" style="left:1894px;top:279px;width:1px;height:696px;background:#9f9f9f"></div>
<div class="ab" style="left:0px;top:975px;width:1895px;height:1px;background:#9f9f9f"></div>
<div class="ab" style="left:33px;top:279px;width:71px;height:28px;background:#fff2cc"></div>
<div class="ab" style="left:103px;top:279px;width:115px;height:28px;background:#fff2cc"></div>
<div class="ab" style="left:217px;top:279px;width:114px;height:28px;background:#fff2cc"></div>
<div class="ab" style="left:330px;top:279px;width:115px;height:28px;background:#fff2cc"></div>
<div class="ab" style="left:444px;top:279px;width:115px;height:28px;background:#fff2cc"></div>
<div class="ab" style="left:558px;top:279px;width:115px;height:28px;background:#fff2cc"></div>
<div class="ab" style="left:672px;top:279px;width:115px;height:28px;background:#fff2cc"></div>
<div class="ab" style="left:786px;top:279px;width:115px;height:28px;background:#fff2cc"></div>
<div class="ab" style="left:33px;top:306px;width:71px;height:28px;background:#ddebf7"></div>
<div class="ab" style="left:103px;top:306px;width:115px;height:28px;background:#ddebf7"></div>
<div class="ab" style="left:217px;top:306px;width:114px;height:28px;background:#ddebf7"></div>
<div class="ab" style="left:330px;top:306px;width:115px;height:28px;background:#ddebf7"></div>
<div class="ab" style="left:444px;top:306px;width:115px;height:28px;background:#ddebf7"></div>
<div class="ab" style="left:558px;top:306px;width:115px;height:28px;background:#ddebf7"></div>
<div class="ab" style="left:672px;top:306px;width:115px;height:28px;background:#ddebf7"></div>
<div class="ab" style="left:786px;top:306px;width:115px;height:28px;background:#ffe699"></div>
<div class="ab" style="left:33px;top:333px;width:71px;height:27px;background:#ddebf7"></div>
<div class="ab" style="left:103px;top:333px;width:115px;height:27px;background:#ddebf7"></div>
<div class="ab" style="left:217px;top:333px;width:114px;height:27px;background:#ddebf7"></div>
<div class="ab" style="left:330px;top:333px;width:115px;height:27px;background:#ddebf7"></div>
<div class="ab" style="left:444px;top:333px;width:115px;height:27px;background:#ddebf7"></div>
<div class="ab" style="left:558px;top:333px;width:115px;height:27px;background:#ddebf7"></div>
<div class="ab" style="left:672px;top:333px;width:115px;height:27px;background:#ddebf7"></div>
<div class="ab" style="left:786px;top:333px;width:115px;height:27px;background:#ffe699"></div>
<div class="ab" style="left:33px;top:359px;width:71px;height:27px;background:#ddebf7"></div>
<div class="ab" style="left:103px;top:359px;width:115px;height:27px;background:#ddebf7"></div>
<div class="ab" style="left:217px;top:359px;width:114px;height:27px;background:#ddebf7"></div>
<div class="ab" style="left:330px;top:359px;width:115px;height:27px;background:#ddebf7"></div>
<div class="ab" style="left:444px;top:359px;width:115px;height:27px;background:#ddebf7"></div>
<div class="ab" style="left:558px;top:359px;width:115px;height:27px;background:#ddebf7"></div>
<div class="ab" style="left:672px;top:359px;width:115px;height:27px;background:#ddebf7"></div>
<div class="ab" style="left:786px;top:359px;width:115px;height:27px;background:#ffe699"></div>
<div class="ab" style="left:33px;top:385px;width:71px;height:27px;background:#ddebf7"></div>
<div class="ab" style="left:103px;top:385px;width:115px;height:27px;background:#ddebf7"></div>
<div class="ab" style="left:217px;top:385px;width:114px;height:27px;background:#ddebf7"></div>
<div class="ab" style="left:330px;top:385px;width:115px;height:27px;background:#ddebf7"></div>
<div class="ab" style="left:444px;top:385px;width:115px;height:27px;background:#ddebf7"></div>
<div class="ab" style="left:558px;top:385px;width:115px;height:27px;background:#ddebf7"></div>
<div class="ab" style="left:672px;top:385px;width:115px;height:27px;background:#ddebf7"></div>
<div class="ab" style="left:786px;top:385px;width:115px;height:27px;background:#ffe699"></div>
<div class="ab" style="left:33px;top:411px;width:71px;height:27px;background:#ddebf7"></div>
<div class="ab" style="left:103px;top:411px;width:115px;height:27px;background:#ddebf7"></div>
<div class="ab" style="left:217px;top:411px;width:114px;height:27px;background:#ddebf7"></div>
<div class="ab" style="left:330px;top:411px;width:115px;height:27px;background:#ddebf7"></div>
<div class="ab" style="left:444px;top:411px;width:115px;height:27px;background:#ddebf7"></div>
<div class="ab" style="left:558px;top:411px;width:115px;height:27px;background:#ddebf7"></div>
<div class="ab" style="left:672px;top:411px;width:115px;height:27px;background:#ddebf7"></div>
<div class="ab" style="left:786px;top:411px;width:115px;height:27px;background:#ffe699"></div>
<div class="ab" style="left:33px;top:437px;width:71px;height:27px;background:#ddebf7"></div>
<div class="ab" style="left:103px;top:437px;width:115px;height:27px;background:#ddebf7"></div>
<div class="ab" style="left:217px;top:437px;width:114px;height:27px;background:#ddebf7"></div>
<div class="ab" style="left:330px;top:437px;width:115px;height:27px;background:#ddebf7"></div>
<div class="ab" style="left:444px;top:437px;width:115px;height:27px;background:#ddebf7"></div>
<div class="ab" style="left:558px;top:437px;width:115px;height:27px;background:#ddebf7"></div>
<div class="ab" style="left:672px;top:437px;width:115px;height:27px;background:#ddebf7"></div>
<div class="ab" style="left:786px;top:437px;width:115px;height:27px;background:#ffe699"></div>
<div class="ab" style="left:33px;top:463px;width:71px;height:27px;background:#ddebf7"></div>
<div class="ab" style="left:103px;top:463px;width:115px;height:27px;background:#ddebf7"></div>
<div class="ab" style="left:217px;top:463px;width:114px;height:27px;background:#ddebf7"></div>
<div class="ab" style="left:330px;top:463px;width:115px;height:27px;background:#ddebf7"></div>
<div class="ab" style="left:444px;top:463px;width:115px;height:27px;background:#ddebf7"></div>
<div class="ab" style="left:558px;top:463px;width:115px;height:27px;background:#ddebf7"></div>
<div class="ab" style="left:672px;top:463px;width:115px;height:27px;background:#ddebf7"></div>
<div class="ab" style="left:786px;top:463px;width:115px;height:27px;background:#ffe699"></div>
<div class="ab" style="left:33px;top:489px;width:71px;height:27px;background:#ddebf7"></div>
<div class="ab" style="left:103px;top:489px;width:115px;height:27px;background:#ddebf7"></div>
<div class="ab" style="left:217px;top:489px;width:114px;height:27px;background:#ddebf7"></div>
<div class="ab" style="left:330px;top:489px;width:115px;height:27px;background:#ddebf7"></div>
<div class="ab" style="left:444px;top:489px;width:115px;height:27px;background:#ddebf7"></div>
<div class="ab" style="left:558px;top:489px;width:115px;height:27px;background:#ddebf7"></div>
<div class="ab" style="left:672px;top:489px;width:115px;height:27px;background:#ddebf7"></div>
<div class="ab" style="left:786px;top:489px;width:115px;height:27px;background:#ffe699"></div>
<div class="ab" style="left:33px;top:515px;width:71px;height:27px;background:#ddebf7"></div>
<div class="ab" style="left:103px;top:515px;width:115px;height:27px;background:#ddebf7"></div>
<div class="ab" style="left:217px;top:515px;width:114px;height:27px;background:#ddebf7"></div>
<div class="ab" style="left:330px;top:515px;width:115px;height:27px;background:#ddebf7"></div>
<div class="ab" style="left:444px;top:515px;width:115px;height:27px;background:#ddebf7"></div>
<div class="ab" style="left:558px;top:515px;width:115px;height:27px;background:#ddebf7"></div>
<div class="ab" style="left:672px;top:515px;width:115px;height:27px;background:#ddebf7"></div>
<div class="ab" style="left:786px;top:515px;width:115px;height:27px;background:#ffe699"></div>
<div class="ab" style="left:33px;top:541px;width:71px;height:28px;background:#ddebf7"></div>
<div class="ab" style="left:103px;top:541px;width:115px;height:28px;background:#ddebf7"></div>
<div class="ab" style="left:217px;top:541px;width:114px;height:28px;background:#ddebf7"></div>
<div class="ab" style="left:330px;top:541px;width:115px;height:28px;background:#ddebf7"></div>
<div class="ab" style="left:444px;top:541px;width:115px;height:28px;background:#ddebf7"></div>
<div class="ab" style="left:558px;top:541px;width:115px;height:28px;background:#ddebf7"></div>
<div class="ab" style="left:672px;top:541px;width:115px;height:28px;background:#ddebf7"></div>
<div class="ab" style="left:786px;top:541px;width:115px;height:28px;background:#ffe699"></div>
<div class="ab" style="left:33px;top:568px;width:71px;height:28px;background:#d0cece"></div>
<div class="ab" style="left:103px;top:568px;width:115px;height:28px;background:#d0cece"></div>
<div class="ab" style="left:217px;top:568px;width:114px;height:28px;background:#d0cece"></div>
<div class="ab" style="left:330px;top:568px;width:115px;height:28px;background:#d0cece"></div>
<div class="ab" style="left:444px;top:568px;width:115px;height:28px;background:#d0cece"></div>
<div class="ab" style="left:558px;top:568px;width:115px;height:28px;background:#d0cece"></div>
<div class="ab" style="left:672px;top:568px;width:115px;height:28px;background:#d0cece"></div>
<div class="ab" style="left:786px;top:568px;width:115px;height:28px;background:#d0cece"></div>
<div class="ab" style="left:33px;top:280px;width:1px;height:315px;background:#000"></div>
<div class="ab" style="left:103px;top:280px;width:1px;height:315px;background:#000"></div>
<div class="ab" style="left:217px;top:280px;width:1px;height:315px;background:#000"></div>
<div class="ab" style="left:330px;top:280px;width:1px;height:315px;background:#000"></div>
<div class="ab" style="left:444px;top:280px;width:1px;height:315px;background:#000"></div>
<div class="ab" style="left:558px;top:280px;width:1px;height:315px;background:#000"></div>
<div class="ab" style="left:672px;top:280px;width:1px;height:315px;background:#000"></div>
<div class="ab" style="left:786px;top:280px;width:1px;height:315px;background:#000"></div>
<div class="ab" style="left:900px;top:280px;width:1px;height:315px;background:#000"></div>
<div class="ab" style="left:785px;top:280px;width:1px;height:315px;background:#000"></div>
<div class="ab" style="left:786px;top:280px;width:1px;height:315px;background:#f4f4f4"></div>
<div class="ab" style="left:787px;top:280px;width:1px;height:315px;background:#000"></div>
<div class="ab" style="left:899px;top:280px;width:2px;height:316px;background:#000"></div>
<div class="ab" style="left:33px;top:306px;width:868px;height:1px;background:#000"></div>
<div class="ab" style="left:33px;top:333px;width:868px;height:1px;background:#000"></div>
<div class="ab" style="left:33px;top:359px;width:868px;height:1px;background:#000"></div>
<div class="ab" style="left:33px;top:385px;width:868px;height:1px;background:#000"></div>
<div class="ab" style="left:33px;top:411px;width:868px;height:1px;background:#000"></div>
<div class="ab" style="left:33px;top:437px;width:868px;height:1px;background:#000"></div>
<div class="ab" style="left:33px;top:463px;width:868px;height:1px;background:#000"></div>
<div class="ab" style="left:33px;top:489px;width:868px;height:1px;background:#000"></div>
<div class="ab" style="left:33px;top:515px;width:868px;height:1px;background:#000"></div>
<div class="ab" style="left:33px;top:541px;width:868px;height:1px;background:#000"></div>
<div class="ab" style="left:33px;top:568px;width:868px;height:1px;background:#000"></div>
<div class="ab" style="left:33px;top:595px;width:868px;height:1px;background:#000"></div>
<div class="ab" style="left:33px;top:305px;width:868px;height:1px;background:#000"></div>
<div class="ab" style="left:34px;top:306px;width:866px;height:1px;background:#f4f4f4"></div>
<div class="ab" style="left:33px;top:307px;width:868px;height:1px;background:#000"></div>
<div class="ab" style="left:33px;top:568px;width:752px;height:2px;background:#000"></div>
<div class="ab" style="left:785px;top:567px;width:116px;height:1px;background:#000"></div>
<div class="ab" style="left:787px;top:568px;width:112px;height:1px;background:#d8d8d8"></div>
<div class="ab" style="left:785px;top:569px;width:116px;height:1px;background:#000"></div>
<div class="ab" style="left:33px;top:594px;width:868px;height:2px;background:#000"></div>
<div class="ab" style="left:894px;top:589px;width:5px;height:5px;background:#4e5fc9"></div>
<div class="t" style="left:33px;top:284px;width:70px;text-align:center;font-size:15px;font-weight:bold;color:#000">項目 1</div>
<div class="t" style="left:103px;top:284px;width:114px;text-align:center;font-size:15px;font-weight:bold;color:#000">項目2</div>
<div class="t" style="left:217px;top:284px;width:113px;text-align:center;font-size:15px;font-weight:bold;color:#000">項目3</div>
<div class="t" style="left:330px;top:284px;width:114px;text-align:center;font-size:15px;font-weight:bold;color:#000">項目4</div>
<div class="t" style="left:444px;top:284px;width:114px;text-align:center;font-size:15px;font-weight:bold;color:#000">項目 5</div>
<div class="t" style="left:558px;top:284px;width:114px;text-align:center;font-size:15px;font-weight:bold;color:#000">項目 6</div>
<div class="t" style="left:672px;top:284px;width:114px;text-align:center;font-size:15px;font-weight:bold;color:#000">項目 7</div>
<div class="t" style="left:786px;top:284px;width:114px;text-align:center;font-size:15px;font-weight:bold;color:#000">項目 8</div>
<div class="t" style="left:-57px;top:313px;width:156px;text-align:right;font-size:16px;font-style:italic;font-family:'Liberation Serif',serif;color:#000">1</div>
<div class="t" style="left:57px;top:313px;width:156px;text-align:right;font-size:16px;font-style:italic;font-family:'Liberation Serif',serif;color:#000">2</div>
<div class="t" style="left:170px;top:313px;width:156px;text-align:right;font-size:16px;font-style:italic;font-family:'Liberation Serif',serif;color:#000">3</div>
<div class="t" style="left:284px;top:313px;width:156px;text-align:right;font-size:16px;font-style:italic;font-family:'Liberation Serif',serif;color:#000">4</div>
<div class="t" style="left:398px;top:313px;width:156px;text-align:right;font-size:16px;font-style:italic;font-family:'Liberation Serif',serif;color:#000">5</div>
<div class="t" style="left:512px;top:313px;width:156px;text-align:right;font-size:16px;font-style:italic;font-family:'Liberation Serif',serif;color:#000">6</div>
<div class="t" style="left:626px;top:313px;width:156px;text-align:right;font-size:16px;font-style:italic;font-family:'Liberation Serif',serif;color:#000">7</div>
<div class="t" style="left:740px;top:313px;width:156px;text-align:right;font-size:16px;font-style:italic;font-family:'Liberation Serif',serif;color:#ff0000">28</div>
<div class="t" style="left:-57px;top:340px;width:156px;text-align:right;font-size:16px;font-style:italic;font-family:'Liberation Serif',serif;color:#000">2</div>
<div class="t" style="left:57px;top:340px;width:156px;text-align:right;font-size:16px;font-style:italic;font-family:'Liberation Serif',serif;color:#000">3</div>
<div class="t" style="left:170px;top:340px;width:156px;text-align:right;font-size:16px;font-style:italic;font-family:'Liberation Serif',serif;color:#000">4</div>
<div class="t" style="left:284px;top:340px;width:156px;text-align:right;font-size:16px;font-style:italic;font-family:'Liberation Serif',serif;color:#000">5</div>
<div class="t" style="left:398px;top:340px;width:156px;text-align:right;font-size:16px;font-style:italic;font-family:'Liberation Serif',serif;color:#000">6</div>
<div class="t" style="left:512px;top:340px;width:156px;text-align:right;font-size:16px;font-style:italic;font-family:'Liberation Serif',serif;color:#000">7</div>
<div class="t" style="left:626px;top:340px;width:156px;text-align:right;font-size:16px;font-style:italic;font-family:'Liberation Serif',serif;color:#000">8</div>
<div class="t" style="left:740px;top:340px;width:156px;text-align:right;font-size:16px;font-style:italic;font-family:'Liberation Serif',serif;color:#ff0000">35</div>
<div class="t" style="left:-57px;top:366px;width:156px;text-align:right;font-size:16px;font-style:italic;font-family:'Liberation Serif',serif;color:#000">3</div>
<div class="t" style="left:57px;top:366px;width:156px;text-align:right;font-size:16px;font-style:italic;font-family:'Liberation Serif',serif;color:#000">4</div>
<div class="t" style="left:170px;top:366px;width:156px;text-align:right;font-size:16px;font-style:italic;font-family:'Liberation Serif',serif;color:#000">5</div>
<div class="t" style="left:284px;top:366px;width:156px;text-align:right;font-size:16px;font-style:italic;font-family:'Liberation Serif',serif;color:#000">6</div>
<div class="t" style="left:398px;top:366px;width:156px;text-align:right;font-size:16px;font-style:italic;font-family:'Liberation Serif',serif;color:#000">7</div>
<div class="t" style="left:512px;top:366px;width:156px;text-align:right;font-size:16px;font-style:italic;font-family:'Liberation Serif',serif;color:#000">8</div>
<div class="t" style="left:626px;top:366px;width:156px;text-align:right;font-size:16px;font-style:italic;font-family:'Liberation Serif',serif;color:#000">9</div>
<div class="t" style="left:740px;top:366px;width:156px;text-align:right;font-size:16px;font-style:italic;font-family:'Liberation Serif',serif;color:#ff0000">42</div>
<div class="t" style="left:-57px;top:392px;width:156px;text-align:right;font-size:16px;font-style:italic;font-family:'Liberation Serif',serif;color:#000">4</div>
<div class="t" style="left:57px;top:392px;width:156px;text-align:right;font-size:16px;font-style:italic;font-family:'Liberation Serif',serif;color:#000">5</div>
<div class="t" style="left:170px;top:392px;width:156px;text-align:right;font-size:16px;font-style:italic;font-family:'Liberation Serif',serif;color:#000">6</div>
<div class="t" style="left:284px;top:392px;width:156px;text-align:right;font-size:16px;font-style:italic;font-family:'Liberation Serif',serif;color:#000">7</div>
<div class="t" style="left:398px;top:392px;width:156px;text-align:right;font-size:16px;font-style:italic;font-family:'Liberation Serif',serif;color:#000">8</div>
<div class="t" style="left:512px;top:392px;width:156px;text-align:right;font-size:16px;font-style:italic;font-family:'Liberation Serif',serif;color:#000">9</div>
<div class="t" style="left:626px;top:392px;width:156px;text-align:right;font-size:16px;font-style:italic;font-family:'Liberation Serif',serif;color:#000">10</div>
<div class="t" style="left:740px;top:392px;width:156px;text-align:right;font-size:16px;font-style:italic;font-family:'Liberation Serif',serif;color:#ff0000">49</div>
<div class="t" style="left:-57px;top:418px;width:156px;text-align:right;font-size:16px;font-style:italic;font-family:'Liberation Serif',serif;color:#000">5</div>
<div class="t" style="left:57px;top:418px;width:156px;text-align:right;font-size:16px;font-style:italic;font-family:'Liberation Serif',serif;color:#000">6</div>
<div class="t" style="left:170px;top:418px;width:156px;text-align:right;font-size:16px;font-style:italic;font-family:'Liberation Serif',serif;color:#000">7</div>
<div class="t" style="left:284px;top:418px;width:156px;text-align:right;font-size:16px;font-style:italic;font-family:'Liberation Serif',serif;color:#000">8</div>
<div class="t" style="left:398px;top:418px;width:156px;text-align:right;font-size:16px;font-style:italic;font-family:'Liberation Serif',serif;color:#000">9</div>
<div class="t" style="left:512px;top:418px;width:156px;text-align:right;font-size:16px;font-style:italic;font-family:'Liberation Serif',serif;color:#000">10</div>
<div class="t" style="left:626px;top:418px;width:156px;text-align:right;font-size:16px;font-style:italic;font-family:'Liberation Serif',serif;color:#000">11</div>
<div class="t" style="left:740px;top:418px;width:156px;text-align:right;font-size:16px;font-style:italic;font-family:'Liberation Serif',serif;color:#ff0000">56</div>
<div class="t" style="left:-57px;top:444px;width:156px;text-align:right;font-size:16px;font-style:italic;font-family:'Liberation Serif',serif;color:#000">6</div>
<div class="t" style="left:57px;top:444px;width:156px;text-align:right;font-size:16px;font-style:italic;font-family:'Liberation Serif',serif;color:#000">7</div>
<div class="t" style="left:170px;top:444px;width:156px;text-align:right;font-size:16px;font-style:italic;font-family:'Liberation Serif',serif;color:#000">8</div>
<div class="t" style="left:284px;top:444px;width:156px;text-align:right;font-size:16px;font-style:italic;font-family:'Liberation Serif',serif;color:#000">9</div>
<div class="t" style="left:398px;top:444px;width:156px;text-align:right;font-size:16px;font-style:italic;font-family:'Liberation Serif',serif;color:#000">10</div>
<div class="t" style="left:512px;top:444px;width:156px;text-align:right;font-size:16px;font-style:italic;font-family:'Liberation Serif',serif;color:#000">11</div>
<div class="t" style="left:626px;top:444px;width:156px;text-align:right;font-size:16px;font-style:italic;font-family:'Liberation Serif',serif;color:#000">12</div>
<div class="t" style="left:740px;top:444px;width:156px;text-align:right;font-size:16px;font-style:italic;font-family:'Liberation Serif',serif;color:#ff0000">63</div>
<div class="t" style="left:-57px;top:470px;width:156px;text-align:right;font-size:16px;font-style:italic;font-family:'Liberation Serif',serif;color:#000">7</div>
<div class="t" style="left:57px;top:470px;width:156px;text-align:right;font-size:16px;font-style:italic;font-family:'Liberation Serif',serif;color:#000">8</div>
<div class="t" style="left:170px;top:470px;width:156px;text-align:right;font-size:16px;font-style:italic;font-family:'Liberation Serif',serif;color:#000">9</div>
<div class="t" style="left:284px;top:470px;width:156px;text-align:right;font-size:16px;font-style:italic;font-family:'Liberation Serif',serif;color:#000">10</div>
<div class="t" style="left:398px;top:470px;width:156px;text-align:right;font-size:16px;font-style:italic;font-family:'Liberation Serif',serif;color:#000">11</div>
<div class="t" style="left:512px;top:470px;width:156px;text-align:right;font-size:16px;font-style:italic;font-family:'Liberation Serif',serif;color:#000">12</div>
<div class="t" style="left:626px;top:470px;width:156px;text-align:right;font-size:16px;font-style:italic;font-family:'Liberation Serif',serif;color:#000">13</div>
<div class="t" style="left:740px;top:470px;width:156px;text-align:right;font-size:16px;font-style:italic;font-family:'Liberation Serif',serif;color:#ff0000">70</div>
<div class="t" style="left:-57px;top:496px;width:156px;text-align:right;font-size:16px;font-style:italic;font-family:'Liberation Serif',serif;color:#000">8</div>
<div class="t" style="left:57px;top:496px;width:156px;text-align:right;font-size:16px;font-style:italic;font-family:'Liberation Serif',serif;color:#000">9</div>
<div class="t" style="left:170px;top:496px;width:156px;text-align:right;font-size:16px;font-style:italic;font-family:'Liberation Serif',serif;color:#000">10</div>
<div class="t" style="left:284px;top:496px;width:156px;text-align:right;font-size:16px;font-style:italic;font-family:'Liberation Serif',serif;color:#000">11</div>
<div class="t" style="left:398px;top:496px;width:156px;text-align:right;font-size:16px;font-style:italic;font-family:'Liberation Serif',serif;color:#000">12</div>
<div class="t" style="left:512px;top:496px;width:156px;text-align:right;font-size:16px;font-style:italic;font-family:'Liberation Serif',serif;color:#000">13</div>
<div class="t" style="left:626px;top:496px;width:156px;text-align:right;font-size:16px;font-style:italic;font-family:'Liberation Serif',serif;color:#000">14</div>
<div class="t" style="left:740px;top:496px;width:156px;text-align:right;font-size:16px;font-style:italic;font-family:'Liberation Serif',serif;color:#ff0000">77</div>
<div class="t" style="left:-57px;top:522px;width:156px;text-align:right;font-size:16px;font-style:italic;font-family:'Liberation Serif',serif;color:#000">9</div>
<div class="t" style="left:57px;top:522px;width:156px;text-align:right;font-size:16px;font-style:italic;font-family:'Liberation Serif',serif;color:#000">10</div>
<div class="t" style="left:170px;top:522px;width:156px;text-align:right;font-size:16px;font-style:italic;font-family:'Liberation Serif',serif;color:#000">11</div>
<div class="t" style="left:284px;top:522px;width:156px;text-align:right;font-size:16px;font-style:italic;font-family:'Liberation Serif',serif;color:#000">12</div>
<div class="t" style="left:398px;top:522px;width:156px;text-align:right;font-size:16px;font-style:italic;font-family:'Liberation Serif',serif;color:#000">13</div>
<div class="t" style="left:512px;top:522px;width:156px;text-align:right;font-size:16px;font-style:italic;font-family:'Liberation Serif',serif;color:#000">14</div>
<div class="t" style="left:626px;top:522px;width:156px;text-align:right;font-size:16px;font-style:italic;font-family:'Liberation Serif',serif;color:#000">15</div>
<div class="t" style="left:740px;top:522px;width:156px;text-align:right;font-size:16px;font-style:italic;font-family:'Liberation Serif',serif;color:#ff0000">84</div>
<div class="t" style="left:-57px;top:548px;width:156px;text-align:right;font-size:16px;font-style:italic;font-family:'Liberation Serif',serif;color:#000">10</div>
<div class="t" style="left:57px;top:548px;width:156px;text-align:right;font-size:16px;font-style:italic;font-family:'Liberation Serif',serif;color:#000">11</div>
<div class="t" style="left:170px;top:548px;width:156px;text-align:right;font-size:16px;font-style:italic;font-family:'Liberation Serif',serif;color:#000">12</div>
<div class="t" style="left:284px;top:548px;width:156px;text-align:right;font-size:16px;font-style:italic;font-family:'Liberation Serif',serif;color:#000">13</div>
<div class="t" style="left:398px;top:548px;width:156px;text-align:right;font-size:16px;font-style:italic;font-family:'Liberation Serif',serif;color:#000">14</div>
<div class="t" style="left:512px;top:548px;width:156px;text-align:right;font-size:16px;font-style:italic;font-family:'Liberation Serif',serif;color:#000">15</div>
<div class="t" style="left:626px;top:548px;width:156px;text-align:right;font-size:16px;font-style:italic;font-family:'Liberation Serif',serif;color:#000">16</div>
<div class="t" style="left:740px;top:548px;width:156px;text-align:right;font-size:16px;font-style:italic;font-family:'Liberation Serif',serif;color:#ff0000">91</div>
<div class="t" style="left:-57px;top:574px;width:156px;text-align:right;font-size:16px;font-style:italic;color:#222">55</div>
<div class="t" style="left:57px;top:574px;width:156px;text-align:right;font-size:16px;font-style:italic;color:#222">65</div>
<div class="t" style="left:170px;top:574px;width:156px;text-align:right;font-size:16px;font-style:italic;color:#222">75</div>
<div class="t" style="left:284px;top:574px;width:156px;text-align:right;font-size:16px;font-style:italic;color:#222">85</div>
<div class="t" style="left:398px;top:574px;width:156px;text-align:right;font-size:16px;font-style:italic;color:#222">95</div>
<div class="t" style="left:512px;top:574px;width:156px;text-align:right;font-size:16px;font-style:italic;color:#222">105</div>
<div class="t" style="left:626px;top:574px;width:156px;text-align:right;font-size:16px;font-style:italic;color:#222">115</div>
<div class="t" style="left:740px;top:574px;width:156px;text-align:right;font-size:16px;font-style:italic;color:#222">595</div>
<div class="ab" style="left:900px;top:306px;width:115px;height:29px;border:2px solid #217346"></div>
<div class="ab" style="left:1011px;top:330px;width:6px;height:6px;background:#217346;border:1px solid #fff"></div>
<div class="ab" style="left:708px;top:396px;width:259px;height:24px;background:rgba(205,225,248,0.22)"></div>
<div class="t" id="f46" style="left:743px;top:401px;font-size:15px;color:rgba(90,90,90,0.2);transform:scaleX(0.9097);transform-origin:0 0;">全画面領域切り取り(S)</div>
<div class="ab" style="left:44px;top:621px;width:481px;height:359px;background:#fff;border:1px solid #d9d9d9;border-bottom:none"></div>
<svg class="ab" style="left:44px;top:621px" width="481" height="354"><line x1="32" y1="299.5" x2="465" y2="299.5" stroke="#d9d9d9" stroke-width="1"/><line x1="32" y1="272.5" x2="465" y2="272.5" stroke="#d9d9d9" stroke-width="1"/><line x1="32" y1="245.5" x2="465" y2="245.5" stroke="#d9d9d9" stroke-width="1"/><line x1="32" y1="218.5" x2="465" y2="218.5" stroke="#d9d9d9" stroke-width="1"/><line x1="32" y1="191.5" x2="465" y2="191.5" stroke="#d9d9d9" stroke-width="1"/><line x1="32" y1="164.5" x2="465" y2="164.5" stroke="#d9d9d9" stroke-width="1"/><line x1="32" y1="137.5" x2="465" y2="137.5" stroke="#d9d9d9" stroke-width="1"/><line x1="32" y1="111.5" x2="465" y2="111.5" stroke="#d9d9d9" stroke-width="1"/><line x1="32" y1="84.5" x2="465" y2="84.5" stroke="#d9d9d9" stroke-width="1"/><line x1="32" y1="57.5" x2="465" y2="57.5" stroke="#d9d9d9" stroke-width="1"/><polyline points="52.8,271.7 96.3,258.2 139.8,244.8 183.3,231.4 226.8,218.0 270.3,204.6 313.8,191.1 357.3,177.7 400.8,164.3 444.3,150.9" fill="none" stroke="#5b9bd5" stroke-width="3.1" stroke-linecap="round" stroke-linejoin="round"/><polyline points="52.8,258.2 96.3,244.8 139.8,231.4 183.3,218.0 226.8,204.6 270.3,191.1 313.8,177.7 357.3,164.3 400.8,150.9 444.3,137.5" fill="none" stroke="#ed7d31" stroke-width="3.1" stroke-linecap="round" stroke-linejoin="round"/><polyline points="52.8,244.8 96.3,231.4 139.8,218.0 183.3,204.6 226.8,191.1 270.3,177.7 313.8,164.3 357.3,150.9 400.8,137.5 444.3,124.0" fill="none" stroke="#a5a5a5" stroke-width="3.1" stroke-linecap="round" stroke-linejoin="round"/><polyline points="52.8,231.4 96.3,218.0 139.8,204.6 183.3,191.1 226.8,177.7 270.3,164.3 313.8,150.9 357.3,137.5 400.8,124.0 444.3,110.6" fill="none" stroke="#ffc000" stroke-width="3.1" stroke-linecap="round" stroke-linejoin="round"/><polyline points="52.8,218.0 96.3,204.6 139.8,191.1 183.3,177.7 226.8,164.3 270.3,150.9 313.8,137.5 357.3,124.0 400.8,110.6 444.3,97.2" fill="none" stroke="#4472c4" stroke-width="3.1" stroke-linecap="round" stroke-linejoin="round"/><polyline points="52.8,204.6 96.3,191.1 139.8,177.7 183.3,164.3 226.8,150.9 270.3,137.5 313.8,124.0 357.3,110.6 400.8,97.2 444.3,83.8" fill="none" stroke="#70ad47" stroke-width="3.1" stroke-linecap="round" stroke-linejoin="round"/><line x1="32.599999999999994" y1="339.5" x2="60" y2="339.5" stroke="#5b9bd5" stroke-width="3" stroke-linecap="round"/><line x1="101" y1="339.5" x2="128" y2="339.5" stroke="#ed7d31" stroke-width="3" stroke-linecap="round"/><line x1="169" y1="339.5" x2="196" y2="339.5" stroke="#a5a5a5" stroke-width="3" stroke-linecap="round"/><line x1="237" y1="339.5" x2="265" y2="339.5" stroke="#ffc000" stroke-width="3" stroke-linecap="round"/><line x1="312" y1="339.5" x2="339" y2="339.5" stroke="#4472c4" stroke-width="3" stroke-linecap="round"/><line x1="386" y1="339.5" x2="413" y2="339.5" stroke="#70ad47" stroke-width="3" stroke-linecap="round"/></svg>
<div class="t" id="f47" style="left:219px;top:636px;font-size:18px;color:#595959;transform:scaleX(1.0075);transform-origin:0 0;">グラフ タイトル</div>
<div class="t" style="left:39px;top:913.5px;width:26px;text-align:right;font-size:12px;color:#595959">0</div>
<div class="t" style="left:39px;top:886.66px;width:26px;text-align:right;font-size:12px;color:#595959">2</div>
<div class="t" style="left:39px;top:859.82px;width:26px;text-align:right;font-size:12px;color:#595959">4</div>
<div class="t" style="left:39px;top:832.98px;width:26px;text-align:right;font-size:12px;color:#595959">6</div>
<div class="t" style="left:39px;top:806.14px;width:26px;text-align:right;font-size:12px;color:#595959">8</div>
<div class="t" style="left:39px;top:779.3px;width:26px;text-align:right;font-size:12px;color:#595959">10</div>
<div class="t" style="left:39px;top:752.46px;width:26px;text-align:right;font-size:12px;color:#595959">12</div>
<div class="t" style="left:39px;top:725.62px;width:26px;text-align:right;font-size:12px;color:#595959">14</div>
<div class="t" style="left:39px;top:698.78px;width:26px;text-align:right;font-size:12px;color:#595959">16</div>
<div class="t" style="left:39px;top:671.94px;width:26px;text-align:right;font-size:12px;color:#595959">18</div>
<div class="t" style="left:81.8px;top:928px;width:30px;text-align:center;font-size:12px;color:#595959">1</div>
<div class="t" style="left:125.30000000000001px;top:928px;width:30px;text-align:center;font-size:12px;color:#595959">2</div>
<div class="t" style="left:168.8px;top:928px;width:30px;text-align:center;font-size:12px;color:#595959">3</div>
<div class="t" style="left:212.3px;top:928px;width:30px;text-align:center;font-size:12px;color:#595959">4</div>
<div class="t" style="left:255.8px;top:928px;width:30px;text-align:center;font-size:12px;color:#595959">5</div>
<div class="t" style="left:299.3px;top:928px;width:30px;text-align:center;font-size:12px;color:#595959">6</div>
<div class="t" style="left:342.8px;top:928px;width:30px;text-align:center;font-size:12px;color:#595959">7</div>
<div class="t" style="left:386.3px;top:928px;width:30px;text-align:center;font-size:12px;color:#595959">8</div>
<div class="t" style="left:429.8px;top:928px;width:30px;text-align:center;font-size:12px;color:#595959">9</div>
<div class="t" style="left:473.3px;top:928px;width:30px;text-align:center;font-size:12px;color:#595959">10</div>
<div class="t" id="f48" style="left:106.5px;top:954px;font-size:12px;color:#595959;transform:scaleX(0.9450);transform-origin:0 0;">項目2</div>
<div class="t" id="f49" style="left:175px;top:954px;font-size:12px;color:#595959;transform:scaleX(0.9450);transform-origin:0 0;">項目3</div>
<div class="t" id="f50" style="left:243px;top:954px;font-size:12px;color:#595959;transform:scaleX(0.9450);transform-origin:0 0;">項目4</div>
<div class="t" id="f51" style="left:311px;top:954px;font-size:12px;color:#595959;transform:scaleX(0.9701);transform-origin:0 0;">項目 5</div>
<div class="t" id="f52" style="left:385px;top:954px;font-size:12px;color:#595959;transform:scaleX(0.9701);transform-origin:0 0;">項目 6</div>
<div class="t" id="f53" style="left:459px;top:954px;font-size:12px;color:#595959;transform:scaleX(0.9701);transform-origin:0 0;">項目 7</div>
<div class="ab" style="left:537px;top:621px;width:536px;height:359px;background:#fff;border:1px solid #d9d9d9;border-bottom:none"></div>
<svg class="ab" style="left:537px;top:621px" width="536" height="354"><line x1="32" y1="293.5" x2="520" y2="293.5" stroke="#d9d9d9" stroke-width="1"/><line x1="32" y1="267.5" x2="520" y2="267.5" stroke="#d9d9d9" stroke-width="1"/><line x1="32" y1="241.5" x2="520" y2="241.5" stroke="#d9d9d9" stroke-width="1"/><line x1="32" y1="215.5" x2="520" y2="215.5" stroke="#d9d9d9" stroke-width="1"/><line x1="32" y1="188.5" x2="520" y2="188.5" stroke="#d9d9d9" stroke-width="1"/><line x1="32" y1="162.5" x2="520" y2="162.5" stroke="#d9d9d9" stroke-width="1"/><line x1="32" y1="136.5" x2="520" y2="136.5" stroke="#d9d9d9" stroke-width="1"/><line x1="32" y1="109.5" x2="520" y2="109.5" stroke="#d9d9d9" stroke-width="1"/><line x1="32" y1="83.5" x2="520" y2="83.5" stroke="#d9d9d9" stroke-width="1"/><line x1="32" y1="57.5" x2="520" y2="57.5" stroke="#d9d9d9" stroke-width="1"/><rect x="36.15" y="280.26" width="4.7" height="13.14" fill="#5b9bd5"/><rect x="42.05" y="267.12" width="4.7" height="26.28" fill="#ed7d31"/><rect x="47.95" y="253.98" width="4.7" height="39.42" fill="#a5a5a5"/><rect x="53.85" y="240.84" width="4.7" height="52.56" fill="#ffc000"/><rect x="59.75" y="227.70" width="4.7" height="65.70" fill="#4472c4"/><rect x="65.65" y="214.56" width="4.7" height="78.84" fill="#70ad47"/><rect x="71.55" y="201.42" width="4.7" height="91.98" fill="#255e91"/><rect x="84.98" y="267.12" width="4.7" height="26.28" fill="#5b9bd5"/><rect x="90.88" y="253.98" width="4.7" height="39.42" fill="#ed7d31"/><rect x="96.78" y="240.84" width="4.7" height="52.56" fill="#a5a5a5"/><rect x="102.68" y="227.70" width="4.7" height="65.70" fill="#ffc000"/><rect x="108.58" y="214.56" width="4.7" height="78.84" fill="#4472c4"/><rect x="114.48" y="201.42" width="4.7" height="91.98" fill="#70ad47"/><rect x="120.38" y="188.28" width="4.7" height="105.12" fill="#255e91"/><rect x="133.81" y="253.98" width="4.7" height="39.42" fill="#5b9bd5"/><rect x="139.71" y="240.84" width="4.7" height="52.56" fill="#ed7d31"/><rect x="145.61" y="227.70" width="4.7" height="65.70" fill="#a5a5a5"/><rect x="151.51" y="214.56" width="4.7" height="78.84" fill="#ffc000"/><rect x="157.41" y="201.42" width="4.7" height="91.98" fill="#4472c4"/><rect x="163.31" y="188.28" width="4.7" height="105.12" fill="#70ad47"/><rect x="169.21" y="175.14" width="4.7" height="118.26" fill="#255e91"/><rect x="182.64" y="240.84" width="4.7" height="52.56" fill="#5b9bd5"/><rect x="188.54" y="227.70" width="4.7" height="65.70" fill="#ed7d31"/><rect x="194.44" y="214.56" width="4.7" height="78.84" fill="#a5a5a5"/><rect x="200.34" y="201.42" width="4.7" height="91.98" fill="#ffc000"/><rect x="206.24" y="188.28" width="4.7" height="105.12" fill="#4472c4"/><rect x="212.14" y="175.14" width="4.7" height="118.26" fill="#70ad47"/><rect x="218.04" y="162.00" width="4.7" height="131.40" fill="#255e91"/><rect x="231.47" y="227.70" width="4.7" height="65.70" fill="#5b9bd5"/><rect x="237.37" y="214.56" width="4.7" height="78.84" fill="#ed7d31"/><rect x="243.27" y="201.42" width="4.7" height="91.98" fill="#a5a5a5"/><rect x="249.17" y="188.28" width="4.7" height="105.12" fill="#ffc000"/><rect x="255.07" y="175.14" width="4.7" height="118.26" fill="#4472c4"/><rect x="260.97" y="162.00" width="4.7" height="131.40" fill="#70ad47"/><rect x="266.87" y="148.86" width="4.7" height="144.54" fill="#255e91"/><rect x="280.30" y="214.56" width="4.7" height="78.84" fill="#5b9bd5"/><rect x="286.20" y="201.42" width="4.7" height="91.98" fill="#ed7d31"/><rect x="292.10" y="188.28" width="4.7" height="105.12" fill="#a5a5a5"/><rect x="298.00" y="175.14" width="4.7" height="118.26" fill="#ffc000"/><rect x="303.90" y="162.00" width="4.7" height="131.40" fill="#4472c4"/><rect x="309.80" y="148.86" width="4.7" height="144.54" fill="#70ad47"/><rect x="315.70" y="135.72" width="4.7" height="157.68" fill="#255e91"/><rect x="329.13" y="201.42" width="4.7" height="91.98" fill="#5b9bd5"/><rect x="335.03" y="188.28" width="4.7" height="105.12" fill="#ed7d31"/><rect x="340.93" y="175.14" width="4.7" height="118.26" fill="#a5a5a5"/><rect x="346.83" y="162.00" width="4.7" height="131.40" fill="#ffc000"/><rect x="352.73" y="148.86" width="4.7" height="144.54" fill="#4472c4"/><rect x="358.63" y="135.72" width="4.7" height="157.68" fill="#70ad47"/><rect x="364.53" y="122.58" width="4.7" height="170.82" fill="#255e91"/><rect x="377.96" y="188.28" width="4.7" height="105.12" fill="#5b9bd5"/><rect x="383.86" y="175.14" width="4.7" height="118.26" fill="#ed7d31"/><rect x="389.76" y="162.00" width="4.7" height="131.40" fill="#a5a5a5"/><rect x="395.66" y="148.86" width="4.7" height="144.54" fill="#ffc000"/><rect x="401.56" y="135.72" width="4.7" height="157.68" fill="#4472c4"/><rect x="407.46" y="122.58" width="4.7" height="170.82" fill="#70ad47"/><rect x="413.36" y="109.44" width="4.7" height="183.96" fill="#255e91"/><rect x="426.79" y="175.14" width="4.7" height="118.26" fill="#5b9bd5"/><rect x="432.69" y="162.00" width="4.7" height="131.40" fill="#ed7d31"/><rect x="438.59" y="148.86" width="4.7" height="144.54" fill="#a5a5a5"/><rect x="444.49" y="135.72" width="4.7" height="157.68" fill="#ffc000"/><rect x="450.39" y="122.58" width="4.7" height="170.82" fill="#4472c4"/><rect x="456.29" y="109.44" width="4.7" height="183.96" fill="#70ad47"/><rect x="462.19" y="96.30" width="4.7" height="197.10" fill="#255e91"/><rect x="475.62" y="162.00" width="4.7" height="131.40" fill="#5b9bd5"/><rect x="481.52" y="148.86" width="4.7" height="144.54" fill="#ed7d31"/><rect x="487.42" y="135.72" width="4.7" height="157.68" fill="#a5a5a5"/><rect x="493.32" y="122.58" width="4.7" height="170.82" fill="#ffc000"/><rect x="499.22" y="109.44" width="4.7" height="183.96" fill="#4472c4"/><rect x="505.12" y="96.30" width="4.7" height="197.10" fill="#70ad47"/><rect x="511.02" y="83.16" width="4.7" height="210.24" fill="#255e91"/><rect x="84" y="332" width="7" height="7" fill="#5b9bd5"/><rect x="141" y="332" width="7" height="7" fill="#ed7d31"/><rect x="193" y="332" width="7" height="7" fill="#a5a5a5"/><rect x="244" y="332" width="7" height="7" fill="#ffc000"/><rect x="296" y="332" width="7" height="7" fill="#4472c4"/><rect x="353" y="332" width="7" height="7" fill="#70ad47"/><rect x="410" y="332" width="7" height="7" fill="#255e91"/></svg>
<div class="t" id="f54" style="left:739px;top:636px;font-size:18px;color:#595959;transform:scaleX(1.0075);transform-origin:0 0;">グラフ タイトル</div>
<div class="t" style="left:529px;top:908.4px;width:28px;text-align:right;font-size:12px;color:#595959">0</div>
<div class="t" style="left:529px;top:882.12px;width:28px;text-align:right;font-size:12px;color:#595959">2</div>
<div class="t" style="left:529px;top:855.8399999999999px;width:28px;text-align:right;font-size:12px;color:#595959">4</div>
<div class="t" style="left:529px;top:829.56px;width:28px;text-align:right;font-size:12px;color:#595959">6</div>
<div class="t" style="left:529px;top:803.28px;width:28px;text-align:right;font-size:12px;color:#595959">8</div>
<div class="t" style="left:529px;top:777.0px;width:28px;text-align:right;font-size:12px;color:#595959">10</div>
<div class="t" style="left:529px;top:750.72px;width:28px;text-align:right;font-size:12px;color:#595959">12</div>
<div class="t" style="left:529px;top:724.4399999999999px;width:28px;text-align:right;font-size:12px;color:#595959">14</div>
<div class="t" style="left:529px;top:698.16px;width:28px;text-align:right;font-size:12px;color:#595959">16</div>
<div class="t" style="left:529px;top:671.88px;width:28px;text-align:right;font-size:12px;color:#595959">18</div>
<div class="t" style="left:578.2px;top:924px;width:30px;text-align:center;font-size:12px;color:#595959">1</div>
<div class="t" style="left:627.0300000000001px;top:924px;width:30px;text-align:center;font-size:12px;color:#595959">2</div>
<div class="t" style="left:675.86px;top:924px;width:30px;text-align:center;font-size:12px;color:#595959">3</div>
<div class="t" style="left:724.69px;top:924px;width:30px;text-align:center;font-size:12px;color:#595959">4</div>
<div class="t" style="left:773.52px;top:924px;width:30px;text-align:center;font-size:12px;color:#595959">5</div>
<div class="t" style="left:822.35px;top:924px;width:30px;text-align:center;font-size:12px;color:#595959">6</div>
<div class="t" style="left:871.1800000000001px;top:924px;width:30px;text-align:center;font-size:12px;color:#595959">7</div>
<div class="t" style="left:920.01px;top:924px;width:30px;text-align:center;font-size:12px;color:#595959">8</div>
<div class="t" style="left:968.84px;top:924px;width:30px;text-align:center;font-size:12px;color:#595959">9</div>
<div class="t" style="left:1017.6700000000001px;top:924px;width:30px;text-align:center;font-size:12px;color:#595959">10</div>
<div class="t" id="f55" style="left:630px;top:950px;font-size:12px;color:#595959;transform:scaleX(0.9995);transform-origin:0 0;">項目 1</div>
<div class="t" id="f56" style="left:687px;top:950px;font-size:12px;color:#595959;transform:scaleX(1.0102);transform-origin:0 0;">項目2</div>
<div class="t" id="f57" style="left:739px;top:950px;font-size:12px;color:#595959;transform:scaleX(1.0102);transform-origin:0 0;">項目3</div>
<div class="t" id="f58" style="left:790px;top:950px;font-size:12px;color:#595959;transform:scaleX(1.0102);transform-origin:0 0;">項目4</div>
<div class="t" id="f59" style="left:842px;top:950px;font-size:12px;color:#595959;transform:scaleX(0.9995);transform-origin:0 0;">項目 5</div>
<div class="t" id="f60" style="left:899px;top:950px;font-size:12px;color:#595959;transform:scaleX(0.9995);transform-origin:0 0;">項目 6</div>
<div class="t" id="f61" style="left:956px;top:950px;font-size:12px;color:#595959;transform:scaleX(0.9995);transform-origin:0 0;">項目 7</div>
<div class="ab" style="left:1895px;top:255px;width:25px;height:720px;background:#e6e6e6"></div>
<div class="ab" style="left:1898px;top:256px;width:19px;height:19px;background:#fff;border:1px solid #ababab"></div>
<svg class="ab" style="left:1903px;top:263px" width="10" height="6"><polygon points="0,5 9,5 4.5,0" fill="#777"/></svg>
<div class="ab" style="left:1898px;top:275px;width:19px;height:613px;background:#fff;border:1px solid #ababab"></div>
<div class="ab" style="left:1898px;top:888px;width:19px;height:69px;background:#dadada"></div>
<div class="ab" style="left:1898px;top:957px;width:19px;height:19px;background:#fff;border:1px solid #ababab"></div>
<svg class="ab" style="left:1903px;top:964px" width="10" height="6"><polygon points="0,0 9,0 4.5,5" fill="#777"/></svg>
<div class="ab" style="left:0px;top:976px;width:1920px;height:27px;background:#e6e6e6"></div>
<div class="ab" style="left:0px;top:975px;width:1920px;height:1px;background:#ababab"></div>
<svg class="ab" style="left:26px;top:983px" width="40" height="12"><polygon points="6,1 6,11 1,6" fill="#c4c4c4"/><polygon points="29,1 29,11 34,6" fill="#c4c4c4"/></svg>
<div class="ab" style="left:100px;top:975px;width:88px;height:25px;background:#fff;border-left:1px solid #ababab;border-right:1px solid #ababab"></div>
<div class="ab" style="left:100px;top:997px;width:88px;height:3px;background:#217346"></div>
<div class="t" style="left:114px;top:977px;font-size:18px;color:#217346">Sheet1</div>
<svg class="ab" style="left:219px;top:979px" width="21" height="21"><circle cx="10.5" cy="10.5" r="9.3" stroke="#777" stroke-width="1.3" fill="none"/><path d="M10.5,5 V16 M5,10.5 H16" stroke="#666" stroke-width="1.6"/></svg>
<div class="ab" style="left:959px;top:983px;width:3px;height:3px;background:#a0a0a0"></div>
<div class="ab" style="left:959px;top:989px;width:3px;height:3px;background:#a0a0a0"></div>
<div class="ab" style="left:959px;top:995px;width:3px;height:3px;background:#a0a0a0"></div>
<div class="ab" style="left:977px;top:980px;width:17px;height:19px;background:#fff;border:1px solid #ababab"></div>
<svg class="ab" style="left:983px;top:985px" width="6" height="10"><polygon points="5,0 5,9 0,4.5" fill="#777"/></svg>
<div class="ab" style="left:996px;top:980px;width:825px;height:19px;background:#fff;border:1px solid #ababab"></div>
<div class="ab" style="left:1821px;top:980px;width:55px;height:19px;background:#dadada"></div>
<div class="ab" style="left:1876px;top:980px;width:18px;height:19px;background:#fff;border:1px solid #ababab"></div>
<svg class="ab" style="left:1883px;top:985px" width="6" height="10"><polygon points="0,0 0,9 5,4.5" fill="#777"/></svg>
<div class="ab" style="left:0px;top:1003px;width:1920px;height:27px;background:#f1f1f1"></div>
<div class="ab" style="left:0px;top:1003px;width:1920px;height:1px;background:#d5d5d5"></div>
<div class="t" id="f62" style="left:8px;top:1008px;font-size:15px;color:#444;transform:scaleX(0.9833);transform-origin:0 0;">準備完了</div>
<svg class="ab" style="left:88px;top:1007px" width="16" height="16"><rect x="1.5" y="3.5" width="13" height="11" fill="#fff" stroke="#777"/><rect x="1" y="2" width="14" height="3" fill="#777"/><circle cx="4" cy="3" r="3" fill="#777"/><path d="M3,8 H13 M3,11 H13 M6,6 V14 M10,6 V14" stroke="#999" stroke-dasharray="1,1"/></svg>
<div class="ab" style="left:1572px;top:1004px;width:41px;height:26px;background:#c8c8c8"></div>
<svg class="ab" style="left:1584px;top:1008px" width="16" height="16"><path d="M1.5,1.5 H14.5 V14.5 H1.5 Z M1.5,5.8 H14.5 M1.5,10.2 H14.5 M5.8,1.5 V14.5 M10.2,1.5 V14.5" stroke="#777" stroke-width="1.6" fill="none"/></svg>
<svg class="ab" style="left:1625px;top:1008px" width="16" height="16"><rect x="1.5" y="1.5" width="13" height="13" fill="none" stroke="#666"/><rect x="4.5" y="3.5" width="7" height="9" fill="none" stroke="#666"/><path d="M6,6 H10 M6,8 H10 M6,10 H10" stroke="#666"/></svg>
<svg class="ab" style="left:1666px;top:1008px" width="16" height="16"><path d="M1.5,1.5 H14.5 V14.5 H1.5 Z M1.5,8.5 H14.5 M5.5,1.5 V8.5 M9.5,1.5 V8.5" fill="none" stroke="#666"/></svg>
<div class="ab" style="left:1700px;top:1015px;width:10px;height:2px;background:#666"></div>
<div class="ab" style="left:1713px;top:1016px;width:125px;height:1px;background:#b4b4b4"></div>
<div class="ab" style="left:1760px;top:1009px;width:5px;height:15px;background:#666"></div>
<div class="ab" style="left:1775px;top:1012px;width:1px;height:8px;background:#b4b4b4"></div>
<svg class="ab" style="left:1841px;top:1009px" width="13" height="13"><path d="M6.5,1 V12 M1,6.5 H12" stroke="#666" stroke-width="2"/></svg>
<div class="t" style="left:1869px;top:1010px;font-size:16px;color:#444">80%</div>
<div class="ab" style="left:0;top:1030px;width:1920px;height:50px;background:linear-gradient(90deg,#06120d 0%,#0c1812 18%,#17221d 35%,#1c231f 55%,#1f221e 70%,#141d18 85%,#0d1612 100%)"></div>
<svg class="ab" style="left:0;top:1030px" width="460" height="50">
<g fill="#fff"><path d="M20,17 L28,16 V24 H20 Z M29,16 L40,14.5 V24 H29 Z M20,25 H28 V33 L20,32 Z M29,25 H40 V34.5 L29,33 Z"/></g>
<circle cx="90" cy="25" r="9" stroke="#fff" stroke-width="2" fill="none"/>
<rect x="142.5" y="17.5" width="16" height="16" stroke="#fff" stroke-width="1.5" fill="none"/><path d="M140,20 H138.5 V31 H140 M161,20 H162.5 V31 H161" stroke="#fff" stroke-width="1.2" fill="none"/>
<path d="M200,14 Q200,12.5 202,12.5 H208 L210,14.5 H226 Q227.5,14.5 227.5,16 V34 Q227.5,35 226.5,35 H201 Q200,35 200,34 Z" fill="#f8d978"/><rect x="200" y="17" width="27.5" height="18" rx="1" fill="#ffe59a"/><rect x="202" y="14" width="6" height="2" fill="#ffffff"/><rect x="202.5" y="14.2" width="1.5" height="1.6" fill="#2a8ee0"/>
<path d="M205,36 V26 Q205,25 206,25 H222 Q223,25 223,26 V36 H218.5 V29.5 H209.5 V36 Z" fill="#2ea3ea"/>
<circle cx="275.5" cy="24" r="13.5" fill="#1a62b8"/><path d="M262.5,22 C263,13 272,9 281,11 C277,12 272,15 270,20 Z" fill="#6fb3f0"/><path d="M285,14 C290,20 290,30 283,36 C286,30 286,22 282,17 Z" fill="#3d8ee0"/>
<path d="M264,25 L273,19 L283,24 L281,33 Q274,36 267,33 Z" fill="#ece8e0"/><path d="M264,25 L273,28 L283,24" stroke="#b8b0a0" stroke-width="1" fill="none"/><path d="M283,22 C287,26 286,33 280,37 C283,31 283,27 281,24 Z" fill="#1a62b8"/>
<circle cx="337.5" cy="24" r="13.5" fill="#e66a1f"/><circle cx="341" cy="21" r="7.5" fill="#2363b8"/><circle cx="343" cy="18" r="4" fill="#3f8fe0"/><path d="M327,17 C326,28 334,36 343,34 C349,33 352,27 351,22 C350,30 343,33 337,31 C331,29 329,23 331,18 Z" fill="#f08a24"/><path d="M345,12 C350,14 352,19 351,24 L348,21 Z" fill="#fbc02d"/><path d="M330,14 C333,10 338,10 340,12 C336,12 333,14 331,17 Z" fill="#f5a623"/>
<rect x="370" y="0" width="61" height="50" fill="#2c2c2c"/>
<path d="M386,14.5 L402,11.5 V38.5 L386,35.5 Z" fill="#1e7145"/><rect x="402" y="14.5" width="11" height="21" fill="#fff"/><rect x="401" y="14.5" width="2" height="21" fill="#1e7145"/><path d="M404,18 H411 M404,22 H411 M404,26 H411 M404,30 H411 M407,16 V34" stroke="#1e7145" stroke-width="1.2"/>
<path d="M390,19 L397,31 M397,19 L390,31" stroke="#fff" stroke-width="2.2"/>
<rect x="189" y="47" width="51" height="3" fill="#76b9ed"/><rect x="251" y="47" width="51" height="3" fill="#76b9ed"/><rect x="370" y="47" width="61" height="3" fill="#76b9ed"/>
</svg>
<svg class="ab" style="left:1520px;top:1030px" width="400" height="50">
<path d="M16.5,29.5 L24,22 L31.5,29.5" stroke="#fff" stroke-width="1.4" fill="none"/>
<g stroke="#fff" stroke-width="1.3" fill="none"><path d="M57.5,33 A15,15 0 0 1 72,18"/><path d="M61.5,33 A11,11 0 0 1 72,22"/><path d="M65.5,33 A7,7 0 0 1 72,26"/></g><circle cx="71" cy="32" r="1.8" fill="#fff"/>
<path d="M94.5,21.5 H98 L103,17 V33 L98,28.5 H94.5 Z" stroke="#fff" stroke-width="1.3" fill="none"/><path d="M106,22 A4,4 0 0 1 106,28 M109,19 A8,8 0 0 1 109,31 M112,16 A12,12 0 0 1 112,34" stroke="#fff" stroke-width="1.3" fill="none"/>
<rect x="137.5" y="21.5" width="15" height="9" stroke="#fff" stroke-width="1.3" fill="none"/><rect x="139" y="23" width="12" height="6" fill="#fff"/><rect x="152.5" y="24" width="2" height="4" fill="#fff"/><path d="M134,21 V26 H138 M133,18 V21 M136,18 V21" stroke="#fff" stroke-width="1.2" fill="none"/>
<rect x="174.5" y="17.5" width="29" height="16" stroke="#fff" stroke-width="1.3" fill="none"/><path d="M178,22 H200 M178,25 H200 M182,29 H196" stroke="#fff" stroke-dasharray="1.5,1.5"/>
<path d="M221,34 L227.5,16 L234,34 M223.5,28 H231.5" stroke="#fff" stroke-width="1.4" fill="none"/>
<rect x="394" y="0" width="1" height="50" fill="#555"/>
</svg>
<div class="t" style="left:1790px;top:1037px;font-size:14px;color:#fff">15:11</div>
<div class="t" style="left:1769px;top:1059px;font-size:15px;color:#fff">2016/09/04</div>
<svg class="ab" style="left:1866px;top:1043px" width="26" height="24"><path d="M2.5,2.5 H22.5 V16.5 H12 L7,21 V16.5 H2.5 Z" stroke="#fff" stroke-width="1.4" fill="none"/></svg>
</body></html>
